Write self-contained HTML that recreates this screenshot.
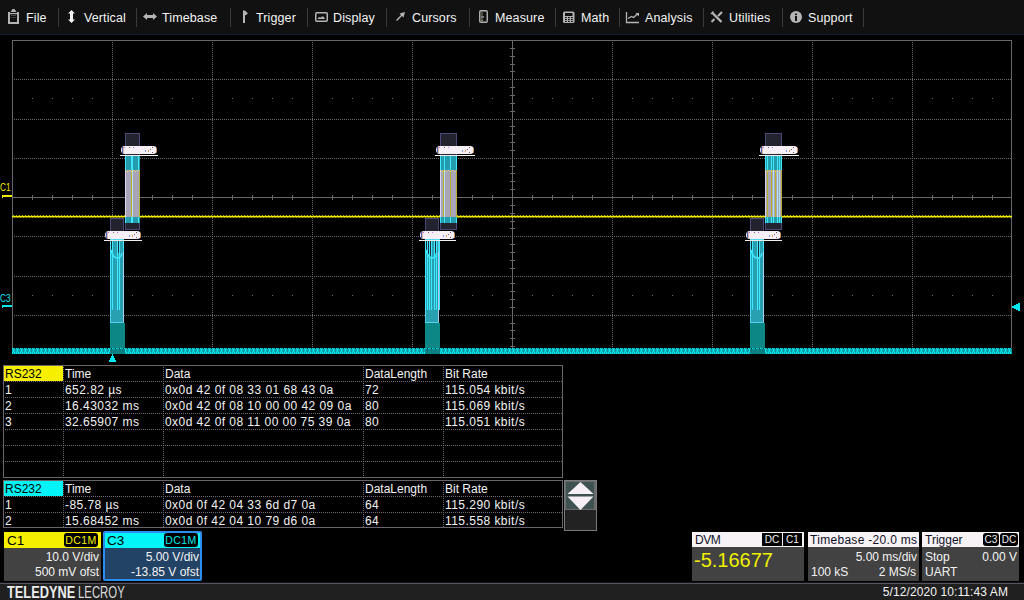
<!DOCTYPE html>
<html><head><meta charset="utf-8"><style>
*{margin:0;padding:0;box-sizing:border-box}
html,body{width:1024px;height:600px;overflow:hidden;background:#000;font-family:"Liberation Sans",sans-serif;color:#f0f0f0}
.abs{position:absolute}
#menu{position:absolute;left:0;top:0;width:1024px;height:35px;background:#111111;border-bottom:1px solid #0f1d2c}
.mi{position:absolute;top:11px;font-size:12.5px;letter-spacing:0.12px;color:#f4f4f4;white-space:nowrap;line-height:14px}
.sep{position:absolute;top:8px;width:1px;height:19px;background:#3a3a3a}
svg{position:absolute;left:0;top:0}
.tbl{position:absolute;border:1px solid #68666b;}
.cell{position:absolute;font-size:12px;line-height:14px;letter-spacing:0.45px;color:#f4f4f4;white-space:nowrap}
.hdot{position:absolute;height:1px;background-image:linear-gradient(90deg,#6e6c71 50%,transparent 50%);background-size:2px 1px}
.lbl{position:absolute;font-size:12px;line-height:14px;color:#f4f4f4;white-space:nowrap}
.r{text-align:right}
.badge{position:absolute;background:#000;border-radius:3px;font-size:12px;line-height:14px;text-align:center}
.vdot{position:absolute;width:1px;background-image:linear-gradient(180deg,#6e6c71 50%,transparent 50%);background-size:1px 2px}
</style></head><body>

<div id="menu">
<div class="mi" style="left:26px">File</div>
<div class="mi" style="left:84px">Vertical</div>
<div class="mi" style="left:162px">Timebase</div>
<div class="mi" style="left:256px">Trigger</div>
<div class="mi" style="left:333px">Display</div>
<div class="mi" style="left:412px">Cursors</div>
<div class="mi" style="left:495px">Measure</div>
<div class="mi" style="left:581px">Math</div>
<div class="mi" style="left:645px">Analysis</div>
<div class="mi" style="left:729px">Utilities</div>
<div class="mi" style="left:808px">Support</div>
<div class="sep" style="left:58px"></div>
<div class="sep" style="left:136px"></div>
<div class="sep" style="left:230px"></div>
<div class="sep" style="left:307px"></div>
<div class="sep" style="left:386px"></div>
<div class="sep" style="left:469px"></div>
<div class="sep" style="left:555px"></div>
<div class="sep" style="left:619px"></div>
<div class="sep" style="left:703px"></div>
<div class="sep" style="left:782px"></div>
<div class="sep" style="left:863px"></div>
<svg width="1024" height="34" style="position:absolute;left:0;top:0">
<g fill="#b4b4b4">
<!-- File clipboard -->
<path d="M8,12 h2 v10 h7 v-10 h2 v12 h-11 z"/>
<path d="M10.5,12 L12.5,9 h2 L16.5,12 z"/>
<rect x="10" y="13" width="7" height="1.2"/>
<rect x="11" y="15" width="5" height="0.8" fill="#555"/>
<rect x="11" y="17" width="5" height="0.8" fill="#444"/>
</g>
<!-- Vertical arrow -->
<path d="M71.5,10 L75,13.5 L73,13.5 L73,19.5 L75,19.5 L71.5,23 L68,19.5 L70,19.5 L70,13.5 L68,13.5 Z" fill="#f2f2f2"/>
<!-- Timebase arrow -->
<path d="M143,16.5 L147,13 L147,15 L153,15 L153,13 L157,16.5 L153,20 L153,18 L147,18 L147,20 Z" fill="#b4b4b4"/>
<!-- Trigger flag -->
<path d="M243,10.5 L245,10.5 L248,13.5 L245,15.5 L245,23 L243,23 Z" fill="#b4b4b4"/>
<!-- Display -->
<rect x="315.75" y="12.75" width="11.5" height="8.5" rx="1" fill="none" stroke="#b4b4b4" stroke-width="1.5"/>
<path d="M317.5,19 L319,17 L320.5,17.5 L322,16.5 L323.5,16.5 L325,19 Z" fill="#b4b4b4"/>
<!-- Cursors -->
<path d="M396,20 L401,15 L399.5,13.5 L405,12 L403.5,17.5 L402,16 L397,21 Z" fill="#b4b4b4"/>
<!-- Measure ruler -->
<rect x="479.75" y="10.75" width="7.5" height="11.5" rx="1.2" fill="none" stroke="#b4b4b4" stroke-width="1.4"/>
<g fill="#8a8a70"><rect x="481" y="12.5" width="2" height="1"/><rect x="481" y="14.5" width="2" height="1"/><rect x="481" y="16.5" width="3" height="1" fill="#ddd"/><rect x="481" y="18.5" width="2" height="1"/><rect x="481" y="20" width="2" height="1"/></g>
<!-- Math calculator -->
<rect x="563" y="11.5" width="11.5" height="11.5" rx="1.5" fill="#b4b4b4"/>
<rect x="565" y="13" width="7.5" height="3" fill="#111"/>
<g fill="#111"><rect x="565" y="17" width="1.8" height="1.2"/><rect x="568" y="17" width="1.8" height="1.2"/><rect x="571" y="17" width="1.8" height="1.2"/>
<rect x="565" y="19" width="1.8" height="1.2"/><rect x="568" y="19" width="1.8" height="1.2"/><rect x="571" y="19" width="1.8" height="1.2"/>
<rect x="565" y="21" width="1.8" height="1"/><rect x="568" y="21" width="1.8" height="1"/><rect x="571" y="21" width="1.8" height="1"/></g>
<!-- Analysis -->
<path d="M626.5,12 V22.5 H639" fill="none" stroke="#b4b4b4" stroke-width="1.3"/>
<path d="M628,18.5 L631.5,16.5 L633.5,17.5 L637.5,14" fill="none" stroke="#b4b4b4" stroke-width="1.3"/>
<path d="M635.5,13 L639,13 L639,16.5 Z" fill="#b4b4b4"/>
<!-- Utilities -->
<path d="M712.5,13 L721.5,22" stroke="#b4b4b4" stroke-width="2.4"/>
<path d="M711,14 L713.5,11.5" stroke="#b4b4b4" stroke-width="1.5"/>
<path d="M714,15 L722.5,11" stroke="none"/>
<path d="M718,16 L722,12" stroke="#b4b4b4" stroke-width="2.2"/>
<path d="M711.5,22 L714.5,19" stroke="#b4b4b4" stroke-width="2"/>
<circle cx="796" cy="17" r="6" fill="#b4b4b4"/>
<rect x="795" y="13.5" width="2" height="1.6" fill="#111"/>
<rect x="795" y="16" width="2" height="5" fill="#111"/>
</svg>
</div>
<svg width="1024" height="600" viewBox="0 0 1024 600" shape-rendering="crispEdges"><rect x="12.5" y="40.5" width="999" height="312" fill="none" stroke="#68666b" stroke-width="1"/><line x1="14" y1="79.5" x2="1011" y2="79.5" stroke="#6e6c71" stroke-dasharray="1 1"/><line x1="14" y1="119.5" x2="1011" y2="119.5" stroke="#6e6c71" stroke-dasharray="1 1"/><line x1="14" y1="158.5" x2="1011" y2="158.5" stroke="#6e6c71" stroke-dasharray="1 1"/><line x1="14" y1="236.5" x2="1011" y2="236.5" stroke="#6e6c71" stroke-dasharray="1 1"/><line x1="14" y1="276.5" x2="1011" y2="276.5" stroke="#6e6c71" stroke-dasharray="1 1"/><line x1="14" y1="315.5" x2="1011" y2="315.5" stroke="#6e6c71" stroke-dasharray="1 1"/><line x1="112.5" y1="42" x2="112.5" y2="352" stroke="#6e6c71" stroke-dasharray="1 1"/><line x1="212.5" y1="42" x2="212.5" y2="352" stroke="#6e6c71" stroke-dasharray="1 1"/><line x1="312.5" y1="42" x2="312.5" y2="352" stroke="#6e6c71" stroke-dasharray="1 1"/><line x1="412.5" y1="42" x2="412.5" y2="352" stroke="#6e6c71" stroke-dasharray="1 1"/><line x1="612.5" y1="42" x2="612.5" y2="352" stroke="#6e6c71" stroke-dasharray="1 1"/><line x1="712.5" y1="42" x2="712.5" y2="352" stroke="#6e6c71" stroke-dasharray="1 1"/><line x1="812.5" y1="42" x2="812.5" y2="352" stroke="#6e6c71" stroke-dasharray="1 1"/><line x1="912.5" y1="42" x2="912.5" y2="352" stroke="#6e6c71" stroke-dasharray="1 1"/><line x1="12" y1="197.5" x2="1011" y2="197.5" stroke="#68666b"/><line x1="512.5" y1="40" x2="512.5" y2="352" stroke="#68666b"/><rect x="32" y="195" width="1" height="5" fill="#68666b"/><rect x="52" y="195" width="1" height="5" fill="#68666b"/><rect x="72" y="195" width="1" height="5" fill="#68666b"/><rect x="92" y="195" width="1" height="5" fill="#68666b"/><rect x="132" y="195" width="1" height="5" fill="#68666b"/><rect x="152" y="195" width="1" height="5" fill="#68666b"/><rect x="172" y="195" width="1" height="5" fill="#68666b"/><rect x="192" y="195" width="1" height="5" fill="#68666b"/><rect x="232" y="195" width="1" height="5" fill="#68666b"/><rect x="252" y="195" width="1" height="5" fill="#68666b"/><rect x="272" y="195" width="1" height="5" fill="#68666b"/><rect x="292" y="195" width="1" height="5" fill="#68666b"/><rect x="332" y="195" width="1" height="5" fill="#68666b"/><rect x="352" y="195" width="1" height="5" fill="#68666b"/><rect x="372" y="195" width="1" height="5" fill="#68666b"/><rect x="392" y="195" width="1" height="5" fill="#68666b"/><rect x="432" y="195" width="1" height="5" fill="#68666b"/><rect x="452" y="195" width="1" height="5" fill="#68666b"/><rect x="472" y="195" width="1" height="5" fill="#68666b"/><rect x="492" y="195" width="1" height="5" fill="#68666b"/><rect x="532" y="195" width="1" height="5" fill="#68666b"/><rect x="552" y="195" width="1" height="5" fill="#68666b"/><rect x="572" y="195" width="1" height="5" fill="#68666b"/><rect x="592" y="195" width="1" height="5" fill="#68666b"/><rect x="632" y="195" width="1" height="5" fill="#68666b"/><rect x="652" y="195" width="1" height="5" fill="#68666b"/><rect x="672" y="195" width="1" height="5" fill="#68666b"/><rect x="692" y="195" width="1" height="5" fill="#68666b"/><rect x="732" y="195" width="1" height="5" fill="#68666b"/><rect x="752" y="195" width="1" height="5" fill="#68666b"/><rect x="772" y="195" width="1" height="5" fill="#68666b"/><rect x="792" y="195" width="1" height="5" fill="#68666b"/><rect x="832" y="195" width="1" height="5" fill="#68666b"/><rect x="852" y="195" width="1" height="5" fill="#68666b"/><rect x="872" y="195" width="1" height="5" fill="#68666b"/><rect x="892" y="195" width="1" height="5" fill="#68666b"/><rect x="932" y="195" width="1" height="5" fill="#68666b"/><rect x="952" y="195" width="1" height="5" fill="#68666b"/><rect x="972" y="195" width="1" height="5" fill="#68666b"/><rect x="992" y="195" width="1" height="5" fill="#68666b"/><rect x="510" y="48" width="5" height="1" fill="#68666b"/><rect x="510" y="56" width="5" height="1" fill="#68666b"/><rect x="510" y="64" width="5" height="1" fill="#68666b"/><rect x="510" y="71" width="5" height="1" fill="#68666b"/><rect x="510" y="87" width="5" height="1" fill="#68666b"/><rect x="510" y="95" width="5" height="1" fill="#68666b"/><rect x="510" y="103" width="5" height="1" fill="#68666b"/><rect x="510" y="111" width="5" height="1" fill="#68666b"/><rect x="510" y="126" width="5" height="1" fill="#68666b"/><rect x="510" y="134" width="5" height="1" fill="#68666b"/><rect x="510" y="142" width="5" height="1" fill="#68666b"/><rect x="510" y="150" width="5" height="1" fill="#68666b"/><rect x="510" y="166" width="5" height="1" fill="#68666b"/><rect x="510" y="173" width="5" height="1" fill="#68666b"/><rect x="510" y="181" width="5" height="1" fill="#68666b"/><rect x="510" y="189" width="5" height="1" fill="#68666b"/><rect x="510" y="205" width="5" height="1" fill="#68666b"/><rect x="510" y="213" width="5" height="1" fill="#68666b"/><rect x="510" y="221" width="5" height="1" fill="#68666b"/><rect x="510" y="228" width="5" height="1" fill="#68666b"/><rect x="510" y="244" width="5" height="1" fill="#68666b"/><rect x="510" y="252" width="5" height="1" fill="#68666b"/><rect x="510" y="260" width="5" height="1" fill="#68666b"/><rect x="510" y="268" width="5" height="1" fill="#68666b"/><rect x="510" y="283" width="5" height="1" fill="#68666b"/><rect x="510" y="291" width="5" height="1" fill="#68666b"/><rect x="510" y="299" width="5" height="1" fill="#68666b"/><rect x="510" y="307" width="5" height="1" fill="#68666b"/><rect x="510" y="323" width="5" height="1" fill="#68666b"/><rect x="510" y="330" width="5" height="1" fill="#68666b"/><rect x="510" y="338" width="5" height="1" fill="#68666b"/><rect x="510" y="346" width="5" height="1" fill="#68666b"/><rect x="32" y="98" width="1" height="1" fill="#6e6c71"/><rect x="52" y="98" width="1" height="1" fill="#6e6c71"/><rect x="72" y="98" width="1" height="1" fill="#6e6c71"/><rect x="92" y="98" width="1" height="1" fill="#6e6c71"/><rect x="132" y="98" width="1" height="1" fill="#6e6c71"/><rect x="152" y="98" width="1" height="1" fill="#6e6c71"/><rect x="172" y="98" width="1" height="1" fill="#6e6c71"/><rect x="192" y="98" width="1" height="1" fill="#6e6c71"/><rect x="232" y="98" width="1" height="1" fill="#6e6c71"/><rect x="252" y="98" width="1" height="1" fill="#6e6c71"/><rect x="272" y="98" width="1" height="1" fill="#6e6c71"/><rect x="292" y="98" width="1" height="1" fill="#6e6c71"/><rect x="332" y="98" width="1" height="1" fill="#6e6c71"/><rect x="352" y="98" width="1" height="1" fill="#6e6c71"/><rect x="372" y="98" width="1" height="1" fill="#6e6c71"/><rect x="392" y="98" width="1" height="1" fill="#6e6c71"/><rect x="432" y="98" width="1" height="1" fill="#6e6c71"/><rect x="452" y="98" width="1" height="1" fill="#6e6c71"/><rect x="472" y="98" width="1" height="1" fill="#6e6c71"/><rect x="492" y="98" width="1" height="1" fill="#6e6c71"/><rect x="532" y="98" width="1" height="1" fill="#6e6c71"/><rect x="552" y="98" width="1" height="1" fill="#6e6c71"/><rect x="572" y="98" width="1" height="1" fill="#6e6c71"/><rect x="592" y="98" width="1" height="1" fill="#6e6c71"/><rect x="632" y="98" width="1" height="1" fill="#6e6c71"/><rect x="652" y="98" width="1" height="1" fill="#6e6c71"/><rect x="672" y="98" width="1" height="1" fill="#6e6c71"/><rect x="692" y="98" width="1" height="1" fill="#6e6c71"/><rect x="732" y="98" width="1" height="1" fill="#6e6c71"/><rect x="752" y="98" width="1" height="1" fill="#6e6c71"/><rect x="772" y="98" width="1" height="1" fill="#6e6c71"/><rect x="792" y="98" width="1" height="1" fill="#6e6c71"/><rect x="832" y="98" width="1" height="1" fill="#6e6c71"/><rect x="852" y="98" width="1" height="1" fill="#6e6c71"/><rect x="872" y="98" width="1" height="1" fill="#6e6c71"/><rect x="892" y="98" width="1" height="1" fill="#6e6c71"/><rect x="932" y="98" width="1" height="1" fill="#6e6c71"/><rect x="952" y="98" width="1" height="1" fill="#6e6c71"/><rect x="972" y="98" width="1" height="1" fill="#6e6c71"/><rect x="992" y="98" width="1" height="1" fill="#6e6c71"/><rect x="32" y="295" width="1" height="1" fill="#6e6c71"/><rect x="52" y="295" width="1" height="1" fill="#6e6c71"/><rect x="72" y="295" width="1" height="1" fill="#6e6c71"/><rect x="92" y="295" width="1" height="1" fill="#6e6c71"/><rect x="132" y="295" width="1" height="1" fill="#6e6c71"/><rect x="152" y="295" width="1" height="1" fill="#6e6c71"/><rect x="172" y="295" width="1" height="1" fill="#6e6c71"/><rect x="192" y="295" width="1" height="1" fill="#6e6c71"/><rect x="232" y="295" width="1" height="1" fill="#6e6c71"/><rect x="252" y="295" width="1" height="1" fill="#6e6c71"/><rect x="272" y="295" width="1" height="1" fill="#6e6c71"/><rect x="292" y="295" width="1" height="1" fill="#6e6c71"/><rect x="332" y="295" width="1" height="1" fill="#6e6c71"/><rect x="352" y="295" width="1" height="1" fill="#6e6c71"/><rect x="372" y="295" width="1" height="1" fill="#6e6c71"/><rect x="392" y="295" width="1" height="1" fill="#6e6c71"/><rect x="432" y="295" width="1" height="1" fill="#6e6c71"/><rect x="452" y="295" width="1" height="1" fill="#6e6c71"/><rect x="472" y="295" width="1" height="1" fill="#6e6c71"/><rect x="492" y="295" width="1" height="1" fill="#6e6c71"/><rect x="532" y="295" width="1" height="1" fill="#6e6c71"/><rect x="552" y="295" width="1" height="1" fill="#6e6c71"/><rect x="572" y="295" width="1" height="1" fill="#6e6c71"/><rect x="592" y="295" width="1" height="1" fill="#6e6c71"/><rect x="632" y="295" width="1" height="1" fill="#6e6c71"/><rect x="652" y="295" width="1" height="1" fill="#6e6c71"/><rect x="672" y="295" width="1" height="1" fill="#6e6c71"/><rect x="692" y="295" width="1" height="1" fill="#6e6c71"/><rect x="732" y="295" width="1" height="1" fill="#6e6c71"/><rect x="752" y="295" width="1" height="1" fill="#6e6c71"/><rect x="772" y="295" width="1" height="1" fill="#6e6c71"/><rect x="792" y="295" width="1" height="1" fill="#6e6c71"/><rect x="832" y="295" width="1" height="1" fill="#6e6c71"/><rect x="852" y="295" width="1" height="1" fill="#6e6c71"/><rect x="872" y="295" width="1" height="1" fill="#6e6c71"/><rect x="892" y="295" width="1" height="1" fill="#6e6c71"/><rect x="932" y="295" width="1" height="1" fill="#6e6c71"/><rect x="952" y="295" width="1" height="1" fill="#6e6c71"/><rect x="972" y="295" width="1" height="1" fill="#6e6c71"/><rect x="992" y="295" width="1" height="1" fill="#6e6c71"/><rect x="12" y="215.8" width="1000" height="1.6" fill="#f0ec00" shape-rendering="auto"/><rect x="13" y="215" width="1" height="1" fill="#f0ec00" opacity="0.6"/><rect x="14" y="217" width="1" height="1" fill="#f0ec00" opacity="0.5"/><rect x="16" y="215" width="1" height="1" fill="#f0ec00" opacity="0.6"/><rect x="17" y="217" width="1" height="1" fill="#f0ec00" opacity="0.5"/><rect x="19" y="215" width="1" height="1" fill="#f0ec00" opacity="0.6"/><rect x="20" y="217" width="1" height="1" fill="#f0ec00" opacity="0.5"/><rect x="22" y="215" width="1" height="1" fill="#f0ec00" opacity="0.6"/><rect x="23" y="217" width="1" height="1" fill="#f0ec00" opacity="0.5"/><rect x="25" y="215" width="1" height="1" fill="#f0ec00" opacity="0.6"/><rect x="26" y="217" width="1" height="1" fill="#f0ec00" opacity="0.5"/><rect x="28" y="215" width="1" height="1" fill="#f0ec00" opacity="0.6"/><rect x="29" y="217" width="1" height="1" fill="#f0ec00" opacity="0.5"/><rect x="31" y="215" width="1" height="1" fill="#f0ec00" opacity="0.6"/><rect x="32" y="217" width="1" height="1" fill="#f0ec00" opacity="0.5"/><rect x="34" y="215" width="1" height="1" fill="#f0ec00" opacity="0.6"/><rect x="35" y="217" width="1" height="1" fill="#f0ec00" opacity="0.5"/><rect x="37" y="215" width="1" height="1" fill="#f0ec00" opacity="0.6"/><rect x="38" y="217" width="1" height="1" fill="#f0ec00" opacity="0.5"/><rect x="40" y="215" width="1" height="1" fill="#f0ec00" opacity="0.6"/><rect x="41" y="217" width="1" height="1" fill="#f0ec00" opacity="0.5"/><rect x="43" y="215" width="1" height="1" fill="#f0ec00" opacity="0.6"/><rect x="44" y="217" width="1" height="1" fill="#f0ec00" opacity="0.5"/><rect x="46" y="215" width="1" height="1" fill="#f0ec00" opacity="0.6"/><rect x="47" y="217" width="1" height="1" fill="#f0ec00" opacity="0.5"/><rect x="49" y="215" width="1" height="1" fill="#f0ec00" opacity="0.6"/><rect x="50" y="217" width="1" height="1" fill="#f0ec00" opacity="0.5"/><rect x="52" y="215" width="1" height="1" fill="#f0ec00" opacity="0.6"/><rect x="53" y="217" width="1" height="1" fill="#f0ec00" opacity="0.5"/><rect x="55" y="215" width="1" height="1" fill="#f0ec00" opacity="0.6"/><rect x="56" y="217" width="1" height="1" fill="#f0ec00" opacity="0.5"/><rect x="58" y="215" width="1" height="1" fill="#f0ec00" opacity="0.6"/><rect x="59" y="217" width="1" height="1" fill="#f0ec00" opacity="0.5"/><rect x="61" y="215" width="1" height="1" fill="#f0ec00" opacity="0.6"/><rect x="62" y="217" width="1" height="1" fill="#f0ec00" opacity="0.5"/><rect x="64" y="215" width="1" height="1" fill="#f0ec00" opacity="0.6"/><rect x="65" y="217" width="1" height="1" fill="#f0ec00" opacity="0.5"/><rect x="67" y="215" width="1" height="1" fill="#f0ec00" opacity="0.6"/><rect x="68" y="217" width="1" height="1" fill="#f0ec00" opacity="0.5"/><rect x="70" y="215" width="1" height="1" fill="#f0ec00" opacity="0.6"/><rect x="71" y="217" width="1" height="1" fill="#f0ec00" opacity="0.5"/><rect x="73" y="215" width="1" height="1" fill="#f0ec00" opacity="0.6"/><rect x="74" y="217" width="1" height="1" fill="#f0ec00" opacity="0.5"/><rect x="76" y="215" width="1" height="1" fill="#f0ec00" opacity="0.6"/><rect x="77" y="217" width="1" height="1" fill="#f0ec00" opacity="0.5"/><rect x="79" y="215" width="1" height="1" fill="#f0ec00" opacity="0.6"/><rect x="80" y="217" width="1" height="1" fill="#f0ec00" opacity="0.5"/><rect x="82" y="215" width="1" height="1" fill="#f0ec00" opacity="0.6"/><rect x="83" y="217" width="1" height="1" fill="#f0ec00" opacity="0.5"/><rect x="85" y="215" width="1" height="1" fill="#f0ec00" opacity="0.6"/><rect x="86" y="217" width="1" height="1" fill="#f0ec00" opacity="0.5"/><rect x="88" y="215" width="1" height="1" fill="#f0ec00" opacity="0.6"/><rect x="89" y="217" width="1" height="1" fill="#f0ec00" opacity="0.5"/><rect x="91" y="215" width="1" height="1" fill="#f0ec00" opacity="0.6"/><rect x="92" y="217" width="1" height="1" fill="#f0ec00" opacity="0.5"/><rect x="94" y="215" width="1" height="1" fill="#f0ec00" opacity="0.6"/><rect x="95" y="217" width="1" height="1" fill="#f0ec00" opacity="0.5"/><rect x="97" y="215" width="1" height="1" fill="#f0ec00" opacity="0.6"/><rect x="98" y="217" width="1" height="1" fill="#f0ec00" opacity="0.5"/><rect x="100" y="215" width="1" height="1" fill="#f0ec00" opacity="0.6"/><rect x="101" y="217" width="1" height="1" fill="#f0ec00" opacity="0.5"/><rect x="103" y="215" width="1" height="1" fill="#f0ec00" opacity="0.6"/><rect x="104" y="217" width="1" height="1" fill="#f0ec00" opacity="0.5"/><rect x="106" y="215" width="1" height="1" fill="#f0ec00" opacity="0.6"/><rect x="107" y="217" width="1" height="1" fill="#f0ec00" opacity="0.5"/><rect x="109" y="215" width="1" height="1" fill="#f0ec00" opacity="0.6"/><rect x="110" y="217" width="1" height="1" fill="#f0ec00" opacity="0.5"/><rect x="112" y="215" width="1" height="1" fill="#f0ec00" opacity="0.6"/><rect x="113" y="217" width="1" height="1" fill="#f0ec00" opacity="0.5"/><rect x="115" y="215" width="1" height="1" fill="#f0ec00" opacity="0.6"/><rect x="116" y="217" width="1" height="1" fill="#f0ec00" opacity="0.5"/><rect x="118" y="215" width="1" height="1" fill="#f0ec00" opacity="0.6"/><rect x="119" y="217" width="1" height="1" fill="#f0ec00" opacity="0.5"/><rect x="121" y="215" width="1" height="1" fill="#f0ec00" opacity="0.6"/><rect x="122" y="217" width="1" height="1" fill="#f0ec00" opacity="0.5"/><rect x="124" y="215" width="1" height="1" fill="#f0ec00" opacity="0.6"/><rect x="125" y="217" width="1" height="1" fill="#f0ec00" opacity="0.5"/><rect x="127" y="215" width="1" height="1" fill="#f0ec00" opacity="0.6"/><rect x="128" y="217" width="1" height="1" fill="#f0ec00" opacity="0.5"/><rect x="130" y="215" width="1" height="1" fill="#f0ec00" opacity="0.6"/><rect x="131" y="217" width="1" height="1" fill="#f0ec00" opacity="0.5"/><rect x="133" y="215" width="1" height="1" fill="#f0ec00" opacity="0.6"/><rect x="134" y="217" width="1" height="1" fill="#f0ec00" opacity="0.5"/><rect x="136" y="215" width="1" height="1" fill="#f0ec00" opacity="0.6"/><rect x="137" y="217" width="1" height="1" fill="#f0ec00" opacity="0.5"/><rect x="139" y="215" width="1" height="1" fill="#f0ec00" opacity="0.6"/><rect x="140" y="217" width="1" height="1" fill="#f0ec00" opacity="0.5"/><rect x="142" y="215" width="1" height="1" fill="#f0ec00" opacity="0.6"/><rect x="143" y="217" width="1" height="1" fill="#f0ec00" opacity="0.5"/><rect x="145" y="215" width="1" height="1" fill="#f0ec00" opacity="0.6"/><rect x="146" y="217" width="1" height="1" fill="#f0ec00" opacity="0.5"/><rect x="148" y="215" width="1" height="1" fill="#f0ec00" opacity="0.6"/><rect x="149" y="217" width="1" height="1" fill="#f0ec00" opacity="0.5"/><rect x="151" y="215" width="1" height="1" fill="#f0ec00" opacity="0.6"/><rect x="152" y="217" width="1" height="1" fill="#f0ec00" opacity="0.5"/><rect x="154" y="215" width="1" height="1" fill="#f0ec00" opacity="0.6"/><rect x="155" y="217" width="1" height="1" fill="#f0ec00" opacity="0.5"/><rect x="157" y="215" width="1" height="1" fill="#f0ec00" opacity="0.6"/><rect x="158" y="217" width="1" height="1" fill="#f0ec00" opacity="0.5"/><rect x="160" y="215" width="1" height="1" fill="#f0ec00" opacity="0.6"/><rect x="161" y="217" width="1" height="1" fill="#f0ec00" opacity="0.5"/><rect x="163" y="215" width="1" height="1" fill="#f0ec00" opacity="0.6"/><rect x="164" y="217" width="1" height="1" fill="#f0ec00" opacity="0.5"/><rect x="166" y="215" width="1" height="1" fill="#f0ec00" opacity="0.6"/><rect x="167" y="217" width="1" height="1" fill="#f0ec00" opacity="0.5"/><rect x="169" y="215" width="1" height="1" fill="#f0ec00" opacity="0.6"/><rect x="170" y="217" width="1" height="1" fill="#f0ec00" opacity="0.5"/><rect x="172" y="215" width="1" height="1" fill="#f0ec00" opacity="0.6"/><rect x="173" y="217" width="1" height="1" fill="#f0ec00" opacity="0.5"/><rect x="175" y="215" width="1" height="1" fill="#f0ec00" opacity="0.6"/><rect x="176" y="217" width="1" height="1" fill="#f0ec00" opacity="0.5"/><rect x="178" y="215" width="1" height="1" fill="#f0ec00" opacity="0.6"/><rect x="179" y="217" width="1" height="1" fill="#f0ec00" opacity="0.5"/><rect x="181" y="215" width="1" height="1" fill="#f0ec00" opacity="0.6"/><rect x="182" y="217" width="1" height="1" fill="#f0ec00" opacity="0.5"/><rect x="184" y="215" width="1" height="1" fill="#f0ec00" opacity="0.6"/><rect x="185" y="217" width="1" height="1" fill="#f0ec00" opacity="0.5"/><rect x="187" y="215" width="1" height="1" fill="#f0ec00" opacity="0.6"/><rect x="188" y="217" width="1" height="1" fill="#f0ec00" opacity="0.5"/><rect x="190" y="215" width="1" height="1" fill="#f0ec00" opacity="0.6"/><rect x="191" y="217" width="1" height="1" fill="#f0ec00" opacity="0.5"/><rect x="193" y="215" width="1" height="1" fill="#f0ec00" opacity="0.6"/><rect x="194" y="217" width="1" height="1" fill="#f0ec00" opacity="0.5"/><rect x="196" y="215" width="1" height="1" fill="#f0ec00" opacity="0.6"/><rect x="197" y="217" width="1" height="1" fill="#f0ec00" opacity="0.5"/><rect x="199" y="215" width="1" height="1" fill="#f0ec00" opacity="0.6"/><rect x="200" y="217" width="1" height="1" fill="#f0ec00" opacity="0.5"/><rect x="202" y="215" width="1" height="1" fill="#f0ec00" opacity="0.6"/><rect x="203" y="217" width="1" height="1" fill="#f0ec00" opacity="0.5"/><rect x="205" y="215" width="1" height="1" fill="#f0ec00" opacity="0.6"/><rect x="206" y="217" width="1" height="1" fill="#f0ec00" opacity="0.5"/><rect x="208" y="215" width="1" height="1" fill="#f0ec00" opacity="0.6"/><rect x="209" y="217" width="1" height="1" fill="#f0ec00" opacity="0.5"/><rect x="211" y="215" width="1" height="1" fill="#f0ec00" opacity="0.6"/><rect x="212" y="217" width="1" height="1" fill="#f0ec00" opacity="0.5"/><rect x="214" y="215" width="1" height="1" fill="#f0ec00" opacity="0.6"/><rect x="215" y="217" width="1" height="1" fill="#f0ec00" opacity="0.5"/><rect x="217" y="215" width="1" height="1" fill="#f0ec00" opacity="0.6"/><rect x="218" y="217" width="1" height="1" fill="#f0ec00" opacity="0.5"/><rect x="220" y="215" width="1" height="1" fill="#f0ec00" opacity="0.6"/><rect x="221" y="217" width="1" height="1" fill="#f0ec00" opacity="0.5"/><rect x="223" y="215" width="1" height="1" fill="#f0ec00" opacity="0.6"/><rect x="224" y="217" width="1" height="1" fill="#f0ec00" opacity="0.5"/><rect x="226" y="215" width="1" height="1" fill="#f0ec00" opacity="0.6"/><rect x="227" y="217" width="1" height="1" fill="#f0ec00" opacity="0.5"/><rect x="229" y="215" width="1" height="1" fill="#f0ec00" opacity="0.6"/><rect x="230" y="217" width="1" height="1" fill="#f0ec00" opacity="0.5"/><rect x="232" y="215" width="1" height="1" fill="#f0ec00" opacity="0.6"/><rect x="233" y="217" width="1" height="1" fill="#f0ec00" opacity="0.5"/><rect x="235" y="215" width="1" height="1" fill="#f0ec00" opacity="0.6"/><rect x="236" y="217" width="1" height="1" fill="#f0ec00" opacity="0.5"/><rect x="238" y="215" width="1" height="1" fill="#f0ec00" opacity="0.6"/><rect x="239" y="217" width="1" height="1" fill="#f0ec00" opacity="0.5"/><rect x="241" y="215" width="1" height="1" fill="#f0ec00" opacity="0.6"/><rect x="242" y="217" width="1" height="1" fill="#f0ec00" opacity="0.5"/><rect x="244" y="215" width="1" height="1" fill="#f0ec00" opacity="0.6"/><rect x="245" y="217" width="1" height="1" fill="#f0ec00" opacity="0.5"/><rect x="247" y="215" width="1" height="1" fill="#f0ec00" opacity="0.6"/><rect x="248" y="217" width="1" height="1" fill="#f0ec00" opacity="0.5"/><rect x="250" y="215" width="1" height="1" fill="#f0ec00" opacity="0.6"/><rect x="251" y="217" width="1" height="1" fill="#f0ec00" opacity="0.5"/><rect x="253" y="215" width="1" height="1" fill="#f0ec00" opacity="0.6"/><rect x="254" y="217" width="1" height="1" fill="#f0ec00" opacity="0.5"/><rect x="256" y="215" width="1" height="1" fill="#f0ec00" opacity="0.6"/><rect x="257" y="217" width="1" height="1" fill="#f0ec00" opacity="0.5"/><rect x="259" y="215" width="1" height="1" fill="#f0ec00" opacity="0.6"/><rect x="260" y="217" width="1" height="1" fill="#f0ec00" opacity="0.5"/><rect x="262" y="215" width="1" height="1" fill="#f0ec00" opacity="0.6"/><rect x="263" y="217" width="1" height="1" fill="#f0ec00" opacity="0.5"/><rect x="265" y="215" width="1" height="1" fill="#f0ec00" opacity="0.6"/><rect x="266" y="217" width="1" height="1" fill="#f0ec00" opacity="0.5"/><rect x="268" y="215" width="1" height="1" fill="#f0ec00" opacity="0.6"/><rect x="269" y="217" width="1" height="1" fill="#f0ec00" opacity="0.5"/><rect x="271" y="215" width="1" height="1" fill="#f0ec00" opacity="0.6"/><rect x="272" y="217" width="1" height="1" fill="#f0ec00" opacity="0.5"/><rect x="274" y="215" width="1" height="1" fill="#f0ec00" opacity="0.6"/><rect x="275" y="217" width="1" height="1" fill="#f0ec00" opacity="0.5"/><rect x="277" y="215" width="1" height="1" fill="#f0ec00" opacity="0.6"/><rect x="278" y="217" width="1" height="1" fill="#f0ec00" opacity="0.5"/><rect x="280" y="215" width="1" height="1" fill="#f0ec00" opacity="0.6"/><rect x="281" y="217" width="1" height="1" fill="#f0ec00" opacity="0.5"/><rect x="283" y="215" width="1" height="1" fill="#f0ec00" opacity="0.6"/><rect x="284" y="217" width="1" height="1" fill="#f0ec00" opacity="0.5"/><rect x="286" y="215" width="1" height="1" fill="#f0ec00" opacity="0.6"/><rect x="287" y="217" width="1" height="1" fill="#f0ec00" opacity="0.5"/><rect x="289" y="215" width="1" height="1" fill="#f0ec00" opacity="0.6"/><rect x="290" y="217" width="1" height="1" fill="#f0ec00" opacity="0.5"/><rect x="292" y="215" width="1" height="1" fill="#f0ec00" opacity="0.6"/><rect x="293" y="217" width="1" height="1" fill="#f0ec00" opacity="0.5"/><rect x="295" y="215" width="1" height="1" fill="#f0ec00" opacity="0.6"/><rect x="296" y="217" width="1" height="1" fill="#f0ec00" opacity="0.5"/><rect x="298" y="215" width="1" height="1" fill="#f0ec00" opacity="0.6"/><rect x="299" y="217" width="1" height="1" fill="#f0ec00" opacity="0.5"/><rect x="301" y="215" width="1" height="1" fill="#f0ec00" opacity="0.6"/><rect x="302" y="217" width="1" height="1" fill="#f0ec00" opacity="0.5"/><rect x="304" y="215" width="1" height="1" fill="#f0ec00" opacity="0.6"/><rect x="305" y="217" width="1" height="1" fill="#f0ec00" opacity="0.5"/><rect x="307" y="215" width="1" height="1" fill="#f0ec00" opacity="0.6"/><rect x="308" y="217" width="1" height="1" fill="#f0ec00" opacity="0.5"/><rect x="310" y="215" width="1" height="1" fill="#f0ec00" opacity="0.6"/><rect x="311" y="217" width="1" height="1" fill="#f0ec00" opacity="0.5"/><rect x="313" y="215" width="1" height="1" fill="#f0ec00" opacity="0.6"/><rect x="314" y="217" width="1" height="1" fill="#f0ec00" opacity="0.5"/><rect x="316" y="215" width="1" height="1" fill="#f0ec00" opacity="0.6"/><rect x="317" y="217" width="1" height="1" fill="#f0ec00" opacity="0.5"/><rect x="319" y="215" width="1" height="1" fill="#f0ec00" opacity="0.6"/><rect x="320" y="217" width="1" height="1" fill="#f0ec00" opacity="0.5"/><rect x="322" y="215" width="1" height="1" fill="#f0ec00" opacity="0.6"/><rect x="323" y="217" width="1" height="1" fill="#f0ec00" opacity="0.5"/><rect x="325" y="215" width="1" height="1" fill="#f0ec00" opacity="0.6"/><rect x="326" y="217" width="1" height="1" fill="#f0ec00" opacity="0.5"/><rect x="328" y="215" width="1" height="1" fill="#f0ec00" opacity="0.6"/><rect x="329" y="217" width="1" height="1" fill="#f0ec00" opacity="0.5"/><rect x="331" y="215" width="1" height="1" fill="#f0ec00" opacity="0.6"/><rect x="332" y="217" width="1" height="1" fill="#f0ec00" opacity="0.5"/><rect x="334" y="215" width="1" height="1" fill="#f0ec00" opacity="0.6"/><rect x="335" y="217" width="1" height="1" fill="#f0ec00" opacity="0.5"/><rect x="337" y="215" width="1" height="1" fill="#f0ec00" opacity="0.6"/><rect x="338" y="217" width="1" height="1" fill="#f0ec00" opacity="0.5"/><rect x="340" y="215" width="1" height="1" fill="#f0ec00" opacity="0.6"/><rect x="341" y="217" width="1" height="1" fill="#f0ec00" opacity="0.5"/><rect x="343" y="215" width="1" height="1" fill="#f0ec00" opacity="0.6"/><rect x="344" y="217" width="1" height="1" fill="#f0ec00" opacity="0.5"/><rect x="346" y="215" width="1" height="1" fill="#f0ec00" opacity="0.6"/><rect x="347" y="217" width="1" height="1" fill="#f0ec00" opacity="0.5"/><rect x="349" y="215" width="1" height="1" fill="#f0ec00" opacity="0.6"/><rect x="350" y="217" width="1" height="1" fill="#f0ec00" opacity="0.5"/><rect x="352" y="215" width="1" height="1" fill="#f0ec00" opacity="0.6"/><rect x="353" y="217" width="1" height="1" fill="#f0ec00" opacity="0.5"/><rect x="355" y="215" width="1" height="1" fill="#f0ec00" opacity="0.6"/><rect x="356" y="217" width="1" height="1" fill="#f0ec00" opacity="0.5"/><rect x="358" y="215" width="1" height="1" fill="#f0ec00" opacity="0.6"/><rect x="359" y="217" width="1" height="1" fill="#f0ec00" opacity="0.5"/><rect x="361" y="215" width="1" height="1" fill="#f0ec00" opacity="0.6"/><rect x="362" y="217" width="1" height="1" fill="#f0ec00" opacity="0.5"/><rect x="364" y="215" width="1" height="1" fill="#f0ec00" opacity="0.6"/><rect x="365" y="217" width="1" height="1" fill="#f0ec00" opacity="0.5"/><rect x="367" y="215" width="1" height="1" fill="#f0ec00" opacity="0.6"/><rect x="368" y="217" width="1" height="1" fill="#f0ec00" opacity="0.5"/><rect x="370" y="215" width="1" height="1" fill="#f0ec00" opacity="0.6"/><rect x="371" y="217" width="1" height="1" fill="#f0ec00" opacity="0.5"/><rect x="373" y="215" width="1" height="1" fill="#f0ec00" opacity="0.6"/><rect x="374" y="217" width="1" height="1" fill="#f0ec00" opacity="0.5"/><rect x="376" y="215" width="1" height="1" fill="#f0ec00" opacity="0.6"/><rect x="377" y="217" width="1" height="1" fill="#f0ec00" opacity="0.5"/><rect x="379" y="215" width="1" height="1" fill="#f0ec00" opacity="0.6"/><rect x="380" y="217" width="1" height="1" fill="#f0ec00" opacity="0.5"/><rect x="382" y="215" width="1" height="1" fill="#f0ec00" opacity="0.6"/><rect x="383" y="217" width="1" height="1" fill="#f0ec00" opacity="0.5"/><rect x="385" y="215" width="1" height="1" fill="#f0ec00" opacity="0.6"/><rect x="386" y="217" width="1" height="1" fill="#f0ec00" opacity="0.5"/><rect x="388" y="215" width="1" height="1" fill="#f0ec00" opacity="0.6"/><rect x="389" y="217" width="1" height="1" fill="#f0ec00" opacity="0.5"/><rect x="391" y="215" width="1" height="1" fill="#f0ec00" opacity="0.6"/><rect x="392" y="217" width="1" height="1" fill="#f0ec00" opacity="0.5"/><rect x="394" y="215" width="1" height="1" fill="#f0ec00" opacity="0.6"/><rect x="395" y="217" width="1" height="1" fill="#f0ec00" opacity="0.5"/><rect x="397" y="215" width="1" height="1" fill="#f0ec00" opacity="0.6"/><rect x="398" y="217" width="1" height="1" fill="#f0ec00" opacity="0.5"/><rect x="400" y="215" width="1" height="1" fill="#f0ec00" opacity="0.6"/><rect x="401" y="217" width="1" height="1" fill="#f0ec00" opacity="0.5"/><rect x="403" y="215" width="1" height="1" fill="#f0ec00" opacity="0.6"/><rect x="404" y="217" width="1" height="1" fill="#f0ec00" opacity="0.5"/><rect x="406" y="215" width="1" height="1" fill="#f0ec00" opacity="0.6"/><rect x="407" y="217" width="1" height="1" fill="#f0ec00" opacity="0.5"/><rect x="409" y="215" width="1" height="1" fill="#f0ec00" opacity="0.6"/><rect x="410" y="217" width="1" height="1" fill="#f0ec00" opacity="0.5"/><rect x="412" y="215" width="1" height="1" fill="#f0ec00" opacity="0.6"/><rect x="413" y="217" width="1" height="1" fill="#f0ec00" opacity="0.5"/><rect x="415" y="215" width="1" height="1" fill="#f0ec00" opacity="0.6"/><rect x="416" y="217" width="1" height="1" fill="#f0ec00" opacity="0.5"/><rect x="418" y="215" width="1" height="1" fill="#f0ec00" opacity="0.6"/><rect x="419" y="217" width="1" height="1" fill="#f0ec00" opacity="0.5"/><rect x="421" y="215" width="1" height="1" fill="#f0ec00" opacity="0.6"/><rect x="422" y="217" width="1" height="1" fill="#f0ec00" opacity="0.5"/><rect x="424" y="215" width="1" height="1" fill="#f0ec00" opacity="0.6"/><rect x="425" y="217" width="1" height="1" fill="#f0ec00" opacity="0.5"/><rect x="427" y="215" width="1" height="1" fill="#f0ec00" opacity="0.6"/><rect x="428" y="217" width="1" height="1" fill="#f0ec00" opacity="0.5"/><rect x="430" y="215" width="1" height="1" fill="#f0ec00" opacity="0.6"/><rect x="431" y="217" width="1" height="1" fill="#f0ec00" opacity="0.5"/><rect x="433" y="215" width="1" height="1" fill="#f0ec00" opacity="0.6"/><rect x="434" y="217" width="1" height="1" fill="#f0ec00" opacity="0.5"/><rect x="436" y="215" width="1" height="1" fill="#f0ec00" opacity="0.6"/><rect x="437" y="217" width="1" height="1" fill="#f0ec00" opacity="0.5"/><rect x="439" y="215" width="1" height="1" fill="#f0ec00" opacity="0.6"/><rect x="440" y="217" width="1" height="1" fill="#f0ec00" opacity="0.5"/><rect x="442" y="215" width="1" height="1" fill="#f0ec00" opacity="0.6"/><rect x="443" y="217" width="1" height="1" fill="#f0ec00" opacity="0.5"/><rect x="445" y="215" width="1" height="1" fill="#f0ec00" opacity="0.6"/><rect x="446" y="217" width="1" height="1" fill="#f0ec00" opacity="0.5"/><rect x="448" y="215" width="1" height="1" fill="#f0ec00" opacity="0.6"/><rect x="449" y="217" width="1" height="1" fill="#f0ec00" opacity="0.5"/><rect x="451" y="215" width="1" height="1" fill="#f0ec00" opacity="0.6"/><rect x="452" y="217" width="1" height="1" fill="#f0ec00" opacity="0.5"/><rect x="454" y="215" width="1" height="1" fill="#f0ec00" opacity="0.6"/><rect x="455" y="217" width="1" height="1" fill="#f0ec00" opacity="0.5"/><rect x="457" y="215" width="1" height="1" fill="#f0ec00" opacity="0.6"/><rect x="458" y="217" width="1" height="1" fill="#f0ec00" opacity="0.5"/><rect x="460" y="215" width="1" height="1" fill="#f0ec00" opacity="0.6"/><rect x="461" y="217" width="1" height="1" fill="#f0ec00" opacity="0.5"/><rect x="463" y="215" width="1" height="1" fill="#f0ec00" opacity="0.6"/><rect x="464" y="217" width="1" height="1" fill="#f0ec00" opacity="0.5"/><rect x="466" y="215" width="1" height="1" fill="#f0ec00" opacity="0.6"/><rect x="467" y="217" width="1" height="1" fill="#f0ec00" opacity="0.5"/><rect x="469" y="215" width="1" height="1" fill="#f0ec00" opacity="0.6"/><rect x="470" y="217" width="1" height="1" fill="#f0ec00" opacity="0.5"/><rect x="472" y="215" width="1" height="1" fill="#f0ec00" opacity="0.6"/><rect x="473" y="217" width="1" height="1" fill="#f0ec00" opacity="0.5"/><rect x="475" y="215" width="1" height="1" fill="#f0ec00" opacity="0.6"/><rect x="476" y="217" width="1" height="1" fill="#f0ec00" opacity="0.5"/><rect x="478" y="215" width="1" height="1" fill="#f0ec00" opacity="0.6"/><rect x="479" y="217" width="1" height="1" fill="#f0ec00" opacity="0.5"/><rect x="481" y="215" width="1" height="1" fill="#f0ec00" opacity="0.6"/><rect x="482" y="217" width="1" height="1" fill="#f0ec00" opacity="0.5"/><rect x="484" y="215" width="1" height="1" fill="#f0ec00" opacity="0.6"/><rect x="485" y="217" width="1" height="1" fill="#f0ec00" opacity="0.5"/><rect x="487" y="215" width="1" height="1" fill="#f0ec00" opacity="0.6"/><rect x="488" y="217" width="1" height="1" fill="#f0ec00" opacity="0.5"/><rect x="490" y="215" width="1" height="1" fill="#f0ec00" opacity="0.6"/><rect x="491" y="217" width="1" height="1" fill="#f0ec00" opacity="0.5"/><rect x="493" y="215" width="1" height="1" fill="#f0ec00" opacity="0.6"/><rect x="494" y="217" width="1" height="1" fill="#f0ec00" opacity="0.5"/><rect x="496" y="215" width="1" height="1" fill="#f0ec00" opacity="0.6"/><rect x="497" y="217" width="1" height="1" fill="#f0ec00" opacity="0.5"/><rect x="499" y="215" width="1" height="1" fill="#f0ec00" opacity="0.6"/><rect x="500" y="217" width="1" height="1" fill="#f0ec00" opacity="0.5"/><rect x="502" y="215" width="1" height="1" fill="#f0ec00" opacity="0.6"/><rect x="503" y="217" width="1" height="1" fill="#f0ec00" opacity="0.5"/><rect x="505" y="215" width="1" height="1" fill="#f0ec00" opacity="0.6"/><rect x="506" y="217" width="1" height="1" fill="#f0ec00" opacity="0.5"/><rect x="508" y="215" width="1" height="1" fill="#f0ec00" opacity="0.6"/><rect x="509" y="217" width="1" height="1" fill="#f0ec00" opacity="0.5"/><rect x="511" y="215" width="1" height="1" fill="#f0ec00" opacity="0.6"/><rect x="512" y="217" width="1" height="1" fill="#f0ec00" opacity="0.5"/><rect x="514" y="215" width="1" height="1" fill="#f0ec00" opacity="0.6"/><rect x="515" y="217" width="1" height="1" fill="#f0ec00" opacity="0.5"/><rect x="517" y="215" width="1" height="1" fill="#f0ec00" opacity="0.6"/><rect x="518" y="217" width="1" height="1" fill="#f0ec00" opacity="0.5"/><rect x="520" y="215" width="1" height="1" fill="#f0ec00" opacity="0.6"/><rect x="521" y="217" width="1" height="1" fill="#f0ec00" opacity="0.5"/><rect x="523" y="215" width="1" height="1" fill="#f0ec00" opacity="0.6"/><rect x="524" y="217" width="1" height="1" fill="#f0ec00" opacity="0.5"/><rect x="526" y="215" width="1" height="1" fill="#f0ec00" opacity="0.6"/><rect x="527" y="217" width="1" height="1" fill="#f0ec00" opacity="0.5"/><rect x="529" y="215" width="1" height="1" fill="#f0ec00" opacity="0.6"/><rect x="530" y="217" width="1" height="1" fill="#f0ec00" opacity="0.5"/><rect x="532" y="215" width="1" height="1" fill="#f0ec00" opacity="0.6"/><rect x="533" y="217" width="1" height="1" fill="#f0ec00" opacity="0.5"/><rect x="535" y="215" width="1" height="1" fill="#f0ec00" opacity="0.6"/><rect x="536" y="217" width="1" height="1" fill="#f0ec00" opacity="0.5"/><rect x="538" y="215" width="1" height="1" fill="#f0ec00" opacity="0.6"/><rect x="539" y="217" width="1" height="1" fill="#f0ec00" opacity="0.5"/><rect x="541" y="215" width="1" height="1" fill="#f0ec00" opacity="0.6"/><rect x="542" y="217" width="1" height="1" fill="#f0ec00" opacity="0.5"/><rect x="544" y="215" width="1" height="1" fill="#f0ec00" opacity="0.6"/><rect x="545" y="217" width="1" height="1" fill="#f0ec00" opacity="0.5"/><rect x="547" y="215" width="1" height="1" fill="#f0ec00" opacity="0.6"/><rect x="548" y="217" width="1" height="1" fill="#f0ec00" opacity="0.5"/><rect x="550" y="215" width="1" height="1" fill="#f0ec00" opacity="0.6"/><rect x="551" y="217" width="1" height="1" fill="#f0ec00" opacity="0.5"/><rect x="553" y="215" width="1" height="1" fill="#f0ec00" opacity="0.6"/><rect x="554" y="217" width="1" height="1" fill="#f0ec00" opacity="0.5"/><rect x="556" y="215" width="1" height="1" fill="#f0ec00" opacity="0.6"/><rect x="557" y="217" width="1" height="1" fill="#f0ec00" opacity="0.5"/><rect x="559" y="215" width="1" height="1" fill="#f0ec00" opacity="0.6"/><rect x="560" y="217" width="1" height="1" fill="#f0ec00" opacity="0.5"/><rect x="562" y="215" width="1" height="1" fill="#f0ec00" opacity="0.6"/><rect x="563" y="217" width="1" height="1" fill="#f0ec00" opacity="0.5"/><rect x="565" y="215" width="1" height="1" fill="#f0ec00" opacity="0.6"/><rect x="566" y="217" width="1" height="1" fill="#f0ec00" opacity="0.5"/><rect x="568" y="215" width="1" height="1" fill="#f0ec00" opacity="0.6"/><rect x="569" y="217" width="1" height="1" fill="#f0ec00" opacity="0.5"/><rect x="571" y="215" width="1" height="1" fill="#f0ec00" opacity="0.6"/><rect x="572" y="217" width="1" height="1" fill="#f0ec00" opacity="0.5"/><rect x="574" y="215" width="1" height="1" fill="#f0ec00" opacity="0.6"/><rect x="575" y="217" width="1" height="1" fill="#f0ec00" opacity="0.5"/><rect x="577" y="215" width="1" height="1" fill="#f0ec00" opacity="0.6"/><rect x="578" y="217" width="1" height="1" fill="#f0ec00" opacity="0.5"/><rect x="580" y="215" width="1" height="1" fill="#f0ec00" opacity="0.6"/><rect x="581" y="217" width="1" height="1" fill="#f0ec00" opacity="0.5"/><rect x="583" y="215" width="1" height="1" fill="#f0ec00" opacity="0.6"/><rect x="584" y="217" width="1" height="1" fill="#f0ec00" opacity="0.5"/><rect x="586" y="215" width="1" height="1" fill="#f0ec00" opacity="0.6"/><rect x="587" y="217" width="1" height="1" fill="#f0ec00" opacity="0.5"/><rect x="589" y="215" width="1" height="1" fill="#f0ec00" opacity="0.6"/><rect x="590" y="217" width="1" height="1" fill="#f0ec00" opacity="0.5"/><rect x="592" y="215" width="1" height="1" fill="#f0ec00" opacity="0.6"/><rect x="593" y="217" width="1" height="1" fill="#f0ec00" opacity="0.5"/><rect x="595" y="215" width="1" height="1" fill="#f0ec00" opacity="0.6"/><rect x="596" y="217" width="1" height="1" fill="#f0ec00" opacity="0.5"/><rect x="598" y="215" width="1" height="1" fill="#f0ec00" opacity="0.6"/><rect x="599" y="217" width="1" height="1" fill="#f0ec00" opacity="0.5"/><rect x="601" y="215" width="1" height="1" fill="#f0ec00" opacity="0.6"/><rect x="602" y="217" width="1" height="1" fill="#f0ec00" opacity="0.5"/><rect x="604" y="215" width="1" height="1" fill="#f0ec00" opacity="0.6"/><rect x="605" y="217" width="1" height="1" fill="#f0ec00" opacity="0.5"/><rect x="607" y="215" width="1" height="1" fill="#f0ec00" opacity="0.6"/><rect x="608" y="217" width="1" height="1" fill="#f0ec00" opacity="0.5"/><rect x="610" y="215" width="1" height="1" fill="#f0ec00" opacity="0.6"/><rect x="611" y="217" width="1" height="1" fill="#f0ec00" opacity="0.5"/><rect x="613" y="215" width="1" height="1" fill="#f0ec00" opacity="0.6"/><rect x="614" y="217" width="1" height="1" fill="#f0ec00" opacity="0.5"/><rect x="616" y="215" width="1" height="1" fill="#f0ec00" opacity="0.6"/><rect x="617" y="217" width="1" height="1" fill="#f0ec00" opacity="0.5"/><rect x="619" y="215" width="1" height="1" fill="#f0ec00" opacity="0.6"/><rect x="620" y="217" width="1" height="1" fill="#f0ec00" opacity="0.5"/><rect x="622" y="215" width="1" height="1" fill="#f0ec00" opacity="0.6"/><rect x="623" y="217" width="1" height="1" fill="#f0ec00" opacity="0.5"/><rect x="625" y="215" width="1" height="1" fill="#f0ec00" opacity="0.6"/><rect x="626" y="217" width="1" height="1" fill="#f0ec00" opacity="0.5"/><rect x="628" y="215" width="1" height="1" fill="#f0ec00" opacity="0.6"/><rect x="629" y="217" width="1" height="1" fill="#f0ec00" opacity="0.5"/><rect x="631" y="215" width="1" height="1" fill="#f0ec00" opacity="0.6"/><rect x="632" y="217" width="1" height="1" fill="#f0ec00" opacity="0.5"/><rect x="634" y="215" width="1" height="1" fill="#f0ec00" opacity="0.6"/><rect x="635" y="217" width="1" height="1" fill="#f0ec00" opacity="0.5"/><rect x="637" y="215" width="1" height="1" fill="#f0ec00" opacity="0.6"/><rect x="638" y="217" width="1" height="1" fill="#f0ec00" opacity="0.5"/><rect x="640" y="215" width="1" height="1" fill="#f0ec00" opacity="0.6"/><rect x="641" y="217" width="1" height="1" fill="#f0ec00" opacity="0.5"/><rect x="643" y="215" width="1" height="1" fill="#f0ec00" opacity="0.6"/><rect x="644" y="217" width="1" height="1" fill="#f0ec00" opacity="0.5"/><rect x="646" y="215" width="1" height="1" fill="#f0ec00" opacity="0.6"/><rect x="647" y="217" width="1" height="1" fill="#f0ec00" opacity="0.5"/><rect x="649" y="215" width="1" height="1" fill="#f0ec00" opacity="0.6"/><rect x="650" y="217" width="1" height="1" fill="#f0ec00" opacity="0.5"/><rect x="652" y="215" width="1" height="1" fill="#f0ec00" opacity="0.6"/><rect x="653" y="217" width="1" height="1" fill="#f0ec00" opacity="0.5"/><rect x="655" y="215" width="1" height="1" fill="#f0ec00" opacity="0.6"/><rect x="656" y="217" width="1" height="1" fill="#f0ec00" opacity="0.5"/><rect x="658" y="215" width="1" height="1" fill="#f0ec00" opacity="0.6"/><rect x="659" y="217" width="1" height="1" fill="#f0ec00" opacity="0.5"/><rect x="661" y="215" width="1" height="1" fill="#f0ec00" opacity="0.6"/><rect x="662" y="217" width="1" height="1" fill="#f0ec00" opacity="0.5"/><rect x="664" y="215" width="1" height="1" fill="#f0ec00" opacity="0.6"/><rect x="665" y="217" width="1" height="1" fill="#f0ec00" opacity="0.5"/><rect x="667" y="215" width="1" height="1" fill="#f0ec00" opacity="0.6"/><rect x="668" y="217" width="1" height="1" fill="#f0ec00" opacity="0.5"/><rect x="670" y="215" width="1" height="1" fill="#f0ec00" opacity="0.6"/><rect x="671" y="217" width="1" height="1" fill="#f0ec00" opacity="0.5"/><rect x="673" y="215" width="1" height="1" fill="#f0ec00" opacity="0.6"/><rect x="674" y="217" width="1" height="1" fill="#f0ec00" opacity="0.5"/><rect x="676" y="215" width="1" height="1" fill="#f0ec00" opacity="0.6"/><rect x="677" y="217" width="1" height="1" fill="#f0ec00" opacity="0.5"/><rect x="679" y="215" width="1" height="1" fill="#f0ec00" opacity="0.6"/><rect x="680" y="217" width="1" height="1" fill="#f0ec00" opacity="0.5"/><rect x="682" y="215" width="1" height="1" fill="#f0ec00" opacity="0.6"/><rect x="683" y="217" width="1" height="1" fill="#f0ec00" opacity="0.5"/><rect x="685" y="215" width="1" height="1" fill="#f0ec00" opacity="0.6"/><rect x="686" y="217" width="1" height="1" fill="#f0ec00" opacity="0.5"/><rect x="688" y="215" width="1" height="1" fill="#f0ec00" opacity="0.6"/><rect x="689" y="217" width="1" height="1" fill="#f0ec00" opacity="0.5"/><rect x="691" y="215" width="1" height="1" fill="#f0ec00" opacity="0.6"/><rect x="692" y="217" width="1" height="1" fill="#f0ec00" opacity="0.5"/><rect x="694" y="215" width="1" height="1" fill="#f0ec00" opacity="0.6"/><rect x="695" y="217" width="1" height="1" fill="#f0ec00" opacity="0.5"/><rect x="697" y="215" width="1" height="1" fill="#f0ec00" opacity="0.6"/><rect x="698" y="217" width="1" height="1" fill="#f0ec00" opacity="0.5"/><rect x="700" y="215" width="1" height="1" fill="#f0ec00" opacity="0.6"/><rect x="701" y="217" width="1" height="1" fill="#f0ec00" opacity="0.5"/><rect x="703" y="215" width="1" height="1" fill="#f0ec00" opacity="0.6"/><rect x="704" y="217" width="1" height="1" fill="#f0ec00" opacity="0.5"/><rect x="706" y="215" width="1" height="1" fill="#f0ec00" opacity="0.6"/><rect x="707" y="217" width="1" height="1" fill="#f0ec00" opacity="0.5"/><rect x="709" y="215" width="1" height="1" fill="#f0ec00" opacity="0.6"/><rect x="710" y="217" width="1" height="1" fill="#f0ec00" opacity="0.5"/><rect x="712" y="215" width="1" height="1" fill="#f0ec00" opacity="0.6"/><rect x="713" y="217" width="1" height="1" fill="#f0ec00" opacity="0.5"/><rect x="715" y="215" width="1" height="1" fill="#f0ec00" opacity="0.6"/><rect x="716" y="217" width="1" height="1" fill="#f0ec00" opacity="0.5"/><rect x="718" y="215" width="1" height="1" fill="#f0ec00" opacity="0.6"/><rect x="719" y="217" width="1" height="1" fill="#f0ec00" opacity="0.5"/><rect x="721" y="215" width="1" height="1" fill="#f0ec00" opacity="0.6"/><rect x="722" y="217" width="1" height="1" fill="#f0ec00" opacity="0.5"/><rect x="724" y="215" width="1" height="1" fill="#f0ec00" opacity="0.6"/><rect x="725" y="217" width="1" height="1" fill="#f0ec00" opacity="0.5"/><rect x="727" y="215" width="1" height="1" fill="#f0ec00" opacity="0.6"/><rect x="728" y="217" width="1" height="1" fill="#f0ec00" opacity="0.5"/><rect x="730" y="215" width="1" height="1" fill="#f0ec00" opacity="0.6"/><rect x="731" y="217" width="1" height="1" fill="#f0ec00" opacity="0.5"/><rect x="733" y="215" width="1" height="1" fill="#f0ec00" opacity="0.6"/><rect x="734" y="217" width="1" height="1" fill="#f0ec00" opacity="0.5"/><rect x="736" y="215" width="1" height="1" fill="#f0ec00" opacity="0.6"/><rect x="737" y="217" width="1" height="1" fill="#f0ec00" opacity="0.5"/><rect x="739" y="215" width="1" height="1" fill="#f0ec00" opacity="0.6"/><rect x="740" y="217" width="1" height="1" fill="#f0ec00" opacity="0.5"/><rect x="742" y="215" width="1" height="1" fill="#f0ec00" opacity="0.6"/><rect x="743" y="217" width="1" height="1" fill="#f0ec00" opacity="0.5"/><rect x="745" y="215" width="1" height="1" fill="#f0ec00" opacity="0.6"/><rect x="746" y="217" width="1" height="1" fill="#f0ec00" opacity="0.5"/><rect x="748" y="215" width="1" height="1" fill="#f0ec00" opacity="0.6"/><rect x="749" y="217" width="1" height="1" fill="#f0ec00" opacity="0.5"/><rect x="751" y="215" width="1" height="1" fill="#f0ec00" opacity="0.6"/><rect x="752" y="217" width="1" height="1" fill="#f0ec00" opacity="0.5"/><rect x="754" y="215" width="1" height="1" fill="#f0ec00" opacity="0.6"/><rect x="755" y="217" width="1" height="1" fill="#f0ec00" opacity="0.5"/><rect x="757" y="215" width="1" height="1" fill="#f0ec00" opacity="0.6"/><rect x="758" y="217" width="1" height="1" fill="#f0ec00" opacity="0.5"/><rect x="760" y="215" width="1" height="1" fill="#f0ec00" opacity="0.6"/><rect x="761" y="217" width="1" height="1" fill="#f0ec00" opacity="0.5"/><rect x="763" y="215" width="1" height="1" fill="#f0ec00" opacity="0.6"/><rect x="764" y="217" width="1" height="1" fill="#f0ec00" opacity="0.5"/><rect x="766" y="215" width="1" height="1" fill="#f0ec00" opacity="0.6"/><rect x="767" y="217" width="1" height="1" fill="#f0ec00" opacity="0.5"/><rect x="769" y="215" width="1" height="1" fill="#f0ec00" opacity="0.6"/><rect x="770" y="217" width="1" height="1" fill="#f0ec00" opacity="0.5"/><rect x="772" y="215" width="1" height="1" fill="#f0ec00" opacity="0.6"/><rect x="773" y="217" width="1" height="1" fill="#f0ec00" opacity="0.5"/><rect x="775" y="215" width="1" height="1" fill="#f0ec00" opacity="0.6"/><rect x="776" y="217" width="1" height="1" fill="#f0ec00" opacity="0.5"/><rect x="778" y="215" width="1" height="1" fill="#f0ec00" opacity="0.6"/><rect x="779" y="217" width="1" height="1" fill="#f0ec00" opacity="0.5"/><rect x="781" y="215" width="1" height="1" fill="#f0ec00" opacity="0.6"/><rect x="782" y="217" width="1" height="1" fill="#f0ec00" opacity="0.5"/><rect x="784" y="215" width="1" height="1" fill="#f0ec00" opacity="0.6"/><rect x="785" y="217" width="1" height="1" fill="#f0ec00" opacity="0.5"/><rect x="787" y="215" width="1" height="1" fill="#f0ec00" opacity="0.6"/><rect x="788" y="217" width="1" height="1" fill="#f0ec00" opacity="0.5"/><rect x="790" y="215" width="1" height="1" fill="#f0ec00" opacity="0.6"/><rect x="791" y="217" width="1" height="1" fill="#f0ec00" opacity="0.5"/><rect x="793" y="215" width="1" height="1" fill="#f0ec00" opacity="0.6"/><rect x="794" y="217" width="1" height="1" fill="#f0ec00" opacity="0.5"/><rect x="796" y="215" width="1" height="1" fill="#f0ec00" opacity="0.6"/><rect x="797" y="217" width="1" height="1" fill="#f0ec00" opacity="0.5"/><rect x="799" y="215" width="1" height="1" fill="#f0ec00" opacity="0.6"/><rect x="800" y="217" width="1" height="1" fill="#f0ec00" opacity="0.5"/><rect x="802" y="215" width="1" height="1" fill="#f0ec00" opacity="0.6"/><rect x="803" y="217" width="1" height="1" fill="#f0ec00" opacity="0.5"/><rect x="805" y="215" width="1" height="1" fill="#f0ec00" opacity="0.6"/><rect x="806" y="217" width="1" height="1" fill="#f0ec00" opacity="0.5"/><rect x="808" y="215" width="1" height="1" fill="#f0ec00" opacity="0.6"/><rect x="809" y="217" width="1" height="1" fill="#f0ec00" opacity="0.5"/><rect x="811" y="215" width="1" height="1" fill="#f0ec00" opacity="0.6"/><rect x="812" y="217" width="1" height="1" fill="#f0ec00" opacity="0.5"/><rect x="814" y="215" width="1" height="1" fill="#f0ec00" opacity="0.6"/><rect x="815" y="217" width="1" height="1" fill="#f0ec00" opacity="0.5"/><rect x="817" y="215" width="1" height="1" fill="#f0ec00" opacity="0.6"/><rect x="818" y="217" width="1" height="1" fill="#f0ec00" opacity="0.5"/><rect x="820" y="215" width="1" height="1" fill="#f0ec00" opacity="0.6"/><rect x="821" y="217" width="1" height="1" fill="#f0ec00" opacity="0.5"/><rect x="823" y="215" width="1" height="1" fill="#f0ec00" opacity="0.6"/><rect x="824" y="217" width="1" height="1" fill="#f0ec00" opacity="0.5"/><rect x="826" y="215" width="1" height="1" fill="#f0ec00" opacity="0.6"/><rect x="827" y="217" width="1" height="1" fill="#f0ec00" opacity="0.5"/><rect x="829" y="215" width="1" height="1" fill="#f0ec00" opacity="0.6"/><rect x="830" y="217" width="1" height="1" fill="#f0ec00" opacity="0.5"/><rect x="832" y="215" width="1" height="1" fill="#f0ec00" opacity="0.6"/><rect x="833" y="217" width="1" height="1" fill="#f0ec00" opacity="0.5"/><rect x="835" y="215" width="1" height="1" fill="#f0ec00" opacity="0.6"/><rect x="836" y="217" width="1" height="1" fill="#f0ec00" opacity="0.5"/><rect x="838" y="215" width="1" height="1" fill="#f0ec00" opacity="0.6"/><rect x="839" y="217" width="1" height="1" fill="#f0ec00" opacity="0.5"/><rect x="841" y="215" width="1" height="1" fill="#f0ec00" opacity="0.6"/><rect x="842" y="217" width="1" height="1" fill="#f0ec00" opacity="0.5"/><rect x="844" y="215" width="1" height="1" fill="#f0ec00" opacity="0.6"/><rect x="845" y="217" width="1" height="1" fill="#f0ec00" opacity="0.5"/><rect x="847" y="215" width="1" height="1" fill="#f0ec00" opacity="0.6"/><rect x="848" y="217" width="1" height="1" fill="#f0ec00" opacity="0.5"/><rect x="850" y="215" width="1" height="1" fill="#f0ec00" opacity="0.6"/><rect x="851" y="217" width="1" height="1" fill="#f0ec00" opacity="0.5"/><rect x="853" y="215" width="1" height="1" fill="#f0ec00" opacity="0.6"/><rect x="854" y="217" width="1" height="1" fill="#f0ec00" opacity="0.5"/><rect x="856" y="215" width="1" height="1" fill="#f0ec00" opacity="0.6"/><rect x="857" y="217" width="1" height="1" fill="#f0ec00" opacity="0.5"/><rect x="859" y="215" width="1" height="1" fill="#f0ec00" opacity="0.6"/><rect x="860" y="217" width="1" height="1" fill="#f0ec00" opacity="0.5"/><rect x="862" y="215" width="1" height="1" fill="#f0ec00" opacity="0.6"/><rect x="863" y="217" width="1" height="1" fill="#f0ec00" opacity="0.5"/><rect x="865" y="215" width="1" height="1" fill="#f0ec00" opacity="0.6"/><rect x="866" y="217" width="1" height="1" fill="#f0ec00" opacity="0.5"/><rect x="868" y="215" width="1" height="1" fill="#f0ec00" opacity="0.6"/><rect x="869" y="217" width="1" height="1" fill="#f0ec00" opacity="0.5"/><rect x="871" y="215" width="1" height="1" fill="#f0ec00" opacity="0.6"/><rect x="872" y="217" width="1" height="1" fill="#f0ec00" opacity="0.5"/><rect x="874" y="215" width="1" height="1" fill="#f0ec00" opacity="0.6"/><rect x="875" y="217" width="1" height="1" fill="#f0ec00" opacity="0.5"/><rect x="877" y="215" width="1" height="1" fill="#f0ec00" opacity="0.6"/><rect x="878" y="217" width="1" height="1" fill="#f0ec00" opacity="0.5"/><rect x="880" y="215" width="1" height="1" fill="#f0ec00" opacity="0.6"/><rect x="881" y="217" width="1" height="1" fill="#f0ec00" opacity="0.5"/><rect x="883" y="215" width="1" height="1" fill="#f0ec00" opacity="0.6"/><rect x="884" y="217" width="1" height="1" fill="#f0ec00" opacity="0.5"/><rect x="886" y="215" width="1" height="1" fill="#f0ec00" opacity="0.6"/><rect x="887" y="217" width="1" height="1" fill="#f0ec00" opacity="0.5"/><rect x="889" y="215" width="1" height="1" fill="#f0ec00" opacity="0.6"/><rect x="890" y="217" width="1" height="1" fill="#f0ec00" opacity="0.5"/><rect x="892" y="215" width="1" height="1" fill="#f0ec00" opacity="0.6"/><rect x="893" y="217" width="1" height="1" fill="#f0ec00" opacity="0.5"/><rect x="895" y="215" width="1" height="1" fill="#f0ec00" opacity="0.6"/><rect x="896" y="217" width="1" height="1" fill="#f0ec00" opacity="0.5"/><rect x="898" y="215" width="1" height="1" fill="#f0ec00" opacity="0.6"/><rect x="899" y="217" width="1" height="1" fill="#f0ec00" opacity="0.5"/><rect x="901" y="215" width="1" height="1" fill="#f0ec00" opacity="0.6"/><rect x="902" y="217" width="1" height="1" fill="#f0ec00" opacity="0.5"/><rect x="904" y="215" width="1" height="1" fill="#f0ec00" opacity="0.6"/><rect x="905" y="217" width="1" height="1" fill="#f0ec00" opacity="0.5"/><rect x="907" y="215" width="1" height="1" fill="#f0ec00" opacity="0.6"/><rect x="908" y="217" width="1" height="1" fill="#f0ec00" opacity="0.5"/><rect x="910" y="215" width="1" height="1" fill="#f0ec00" opacity="0.6"/><rect x="911" y="217" width="1" height="1" fill="#f0ec00" opacity="0.5"/><rect x="913" y="215" width="1" height="1" fill="#f0ec00" opacity="0.6"/><rect x="914" y="217" width="1" height="1" fill="#f0ec00" opacity="0.5"/><rect x="916" y="215" width="1" height="1" fill="#f0ec00" opacity="0.6"/><rect x="917" y="217" width="1" height="1" fill="#f0ec00" opacity="0.5"/><rect x="919" y="215" width="1" height="1" fill="#f0ec00" opacity="0.6"/><rect x="920" y="217" width="1" height="1" fill="#f0ec00" opacity="0.5"/><rect x="922" y="215" width="1" height="1" fill="#f0ec00" opacity="0.6"/><rect x="923" y="217" width="1" height="1" fill="#f0ec00" opacity="0.5"/><rect x="925" y="215" width="1" height="1" fill="#f0ec00" opacity="0.6"/><rect x="926" y="217" width="1" height="1" fill="#f0ec00" opacity="0.5"/><rect x="928" y="215" width="1" height="1" fill="#f0ec00" opacity="0.6"/><rect x="929" y="217" width="1" height="1" fill="#f0ec00" opacity="0.5"/><rect x="931" y="215" width="1" height="1" fill="#f0ec00" opacity="0.6"/><rect x="932" y="217" width="1" height="1" fill="#f0ec00" opacity="0.5"/><rect x="934" y="215" width="1" height="1" fill="#f0ec00" opacity="0.6"/><rect x="935" y="217" width="1" height="1" fill="#f0ec00" opacity="0.5"/><rect x="937" y="215" width="1" height="1" fill="#f0ec00" opacity="0.6"/><rect x="938" y="217" width="1" height="1" fill="#f0ec00" opacity="0.5"/><rect x="940" y="215" width="1" height="1" fill="#f0ec00" opacity="0.6"/><rect x="941" y="217" width="1" height="1" fill="#f0ec00" opacity="0.5"/><rect x="943" y="215" width="1" height="1" fill="#f0ec00" opacity="0.6"/><rect x="944" y="217" width="1" height="1" fill="#f0ec00" opacity="0.5"/><rect x="946" y="215" width="1" height="1" fill="#f0ec00" opacity="0.6"/><rect x="947" y="217" width="1" height="1" fill="#f0ec00" opacity="0.5"/><rect x="949" y="215" width="1" height="1" fill="#f0ec00" opacity="0.6"/><rect x="950" y="217" width="1" height="1" fill="#f0ec00" opacity="0.5"/><rect x="952" y="215" width="1" height="1" fill="#f0ec00" opacity="0.6"/><rect x="953" y="217" width="1" height="1" fill="#f0ec00" opacity="0.5"/><rect x="955" y="215" width="1" height="1" fill="#f0ec00" opacity="0.6"/><rect x="956" y="217" width="1" height="1" fill="#f0ec00" opacity="0.5"/><rect x="958" y="215" width="1" height="1" fill="#f0ec00" opacity="0.6"/><rect x="959" y="217" width="1" height="1" fill="#f0ec00" opacity="0.5"/><rect x="961" y="215" width="1" height="1" fill="#f0ec00" opacity="0.6"/><rect x="962" y="217" width="1" height="1" fill="#f0ec00" opacity="0.5"/><rect x="964" y="215" width="1" height="1" fill="#f0ec00" opacity="0.6"/><rect x="965" y="217" width="1" height="1" fill="#f0ec00" opacity="0.5"/><rect x="967" y="215" width="1" height="1" fill="#f0ec00" opacity="0.6"/><rect x="968" y="217" width="1" height="1" fill="#f0ec00" opacity="0.5"/><rect x="970" y="215" width="1" height="1" fill="#f0ec00" opacity="0.6"/><rect x="971" y="217" width="1" height="1" fill="#f0ec00" opacity="0.5"/><rect x="973" y="215" width="1" height="1" fill="#f0ec00" opacity="0.6"/><rect x="974" y="217" width="1" height="1" fill="#f0ec00" opacity="0.5"/><rect x="976" y="215" width="1" height="1" fill="#f0ec00" opacity="0.6"/><rect x="977" y="217" width="1" height="1" fill="#f0ec00" opacity="0.5"/><rect x="979" y="215" width="1" height="1" fill="#f0ec00" opacity="0.6"/><rect x="980" y="217" width="1" height="1" fill="#f0ec00" opacity="0.5"/><rect x="982" y="215" width="1" height="1" fill="#f0ec00" opacity="0.6"/><rect x="983" y="217" width="1" height="1" fill="#f0ec00" opacity="0.5"/><rect x="985" y="215" width="1" height="1" fill="#f0ec00" opacity="0.6"/><rect x="986" y="217" width="1" height="1" fill="#f0ec00" opacity="0.5"/><rect x="988" y="215" width="1" height="1" fill="#f0ec00" opacity="0.6"/><rect x="989" y="217" width="1" height="1" fill="#f0ec00" opacity="0.5"/><rect x="991" y="215" width="1" height="1" fill="#f0ec00" opacity="0.6"/><rect x="992" y="217" width="1" height="1" fill="#f0ec00" opacity="0.5"/><rect x="994" y="215" width="1" height="1" fill="#f0ec00" opacity="0.6"/><rect x="995" y="217" width="1" height="1" fill="#f0ec00" opacity="0.5"/><rect x="997" y="215" width="1" height="1" fill="#f0ec00" opacity="0.6"/><rect x="998" y="217" width="1" height="1" fill="#f0ec00" opacity="0.5"/><rect x="1000" y="215" width="1" height="1" fill="#f0ec00" opacity="0.6"/><rect x="1001" y="217" width="1" height="1" fill="#f0ec00" opacity="0.5"/><rect x="1003" y="215" width="1" height="1" fill="#f0ec00" opacity="0.6"/><rect x="1004" y="217" width="1" height="1" fill="#f0ec00" opacity="0.5"/><rect x="1006" y="215" width="1" height="1" fill="#f0ec00" opacity="0.6"/><rect x="1007" y="217" width="1" height="1" fill="#f0ec00" opacity="0.5"/><rect x="1009" y="215" width="1" height="1" fill="#f0ec00" opacity="0.6"/><rect x="1010" y="217" width="1" height="1" fill="#f0ec00" opacity="0.5"/><defs><pattern id="cyb" x="12" y="348" width="4" height="6" patternUnits="userSpaceOnUse"><rect x="0" y="0" width="4" height="6" fill="#08b4bc"/><rect x="0" y="0" width="1" height="1" fill="#00e8f0"/><rect x="2" y="0" width="1" height="1" fill="#04c8d0"/><rect x="3" y="0" width="1" height="1" fill="#032c30"/><rect x="1" y="1" width="1" height="3" fill="#00e8f0"/><rect x="3" y="2" width="1" height="2" fill="#0898a0"/><rect x="0" y="4" width="1" height="2" fill="#00f0f8"/><rect x="2" y="4" width="1" height="2" fill="#00f0f8"/><rect x="1" y="4" width="1" height="2" fill="#08a8b0"/><rect x="3" y="4" width="1" height="2" fill="#08a8b0"/></pattern></defs><rect x="12" y="348" width="1000" height="6" fill="url(#cyb)"/><rect x="125.5" y="133.5" width="14" height="96" fill="#23222f" stroke="#4a4878"/><rect x="125" y="155" width="15" height="15" fill="#249cae"/><rect x="125" y="155" width="1" height="15" fill="#3ee8ff"/><rect x="131" y="155" width="1" height="15" fill="#3ee8ff"/><rect x="132" y="155" width="1" height="15" fill="#3ee8ff"/><rect x="138" y="155" width="1" height="15" fill="#3ee8ff"/><rect x="125" y="170" width="15" height="47" fill="#a9a5b9"/><rect x="125" y="170" width="1" height="47" fill="#dcd4f4"/><rect x="131" y="170" width="1" height="47" fill="#b8b030"/><rect x="139" y="170" width="1" height="47" fill="#b8b030"/><rect x="132" y="170" width="1" height="47" fill="#b0e4f0"/><rect x="125" y="170" width="1" height="1" fill="#f0e860" opacity="0.9"/><rect x="127" y="171" width="1" height="1" fill="#f0e860" opacity="0.9"/><rect x="129" y="170" width="1" height="1" fill="#f0e860" opacity="0.9"/><rect x="131" y="171" width="1" height="1" fill="#f0e860" opacity="0.9"/><rect x="133" y="170" width="1" height="1" fill="#f0e860" opacity="0.9"/><rect x="135" y="171" width="1" height="1" fill="#f0e860" opacity="0.9"/><rect x="137" y="170" width="1" height="1" fill="#f0e860" opacity="0.9"/><rect x="125" y="217" width="15" height="6" fill="#249cae"/><rect x="125" y="217" width="1" height="6" fill="#3ee8ff"/><rect x="131" y="217" width="1" height="6" fill="#3ee8ff"/><rect x="132" y="217" width="1" height="6" fill="#3ee8ff"/><rect x="138" y="217" width="1" height="6" fill="#3ee8ff"/><rect x="110.5" y="218.5" width="13" height="20" fill="#23222f" stroke="#4a4878"/><rect x="110" y="239" width="14" height="84" fill="#28a0b2"/><rect x="110.5" y="239" width="13" height="83.5" fill="none" stroke="#58d0f0"/><rect x="110" y="239" width="1" height="71" fill="#3ee8ff"/><rect x="112" y="239" width="1" height="71" fill="#3ee8ff"/><rect x="117" y="239" width="1" height="71" fill="#3ee8ff"/><rect x="119" y="239" width="1" height="71" fill="#3ee8ff"/><rect x="123" y="239" width="1" height="71" fill="#3ee8ff"/><rect x="111" y="241" width="1" height="9" fill="#1a2a3a"/><rect x="118" y="241" width="1" height="12" fill="#1a2a3a"/><path d="M111,250 Q113,258 117,258 Q121,258 122,253" fill="none" stroke="#3ee8ff" stroke-width="1.4" shape-rendering="auto"/><rect x="123" y="252" width="1" height="70" fill="#d0c8f0" opacity="0.7"/><rect x="110" y="323" width="15" height="25" fill="#0d8686"/><rect x="110" y="349" width="15" height="5" fill="#0a7070" opacity="0.8"/><rect x="121" y="146" width="36" height="8" rx="4" fill="#f6f0f6" shape-rendering="auto"/><rect x="122" y="147" width="1" height="6" fill="#2040b0" opacity="0.8"/><rect x="123" y="147" width="1" height="6" fill="#c08050" opacity="0.5"/><rect x="124" y="147" width="1" height="1" fill="#c040ff" opacity="0.8"/><rect x="129" y="147" width="1" height="1" fill="#404040" opacity="0.8"/><rect x="133" y="147" width="1" height="1" fill="#a040ff" opacity="0.7"/><rect x="145" y="150" width="1" height="2" fill="#6080e0" opacity="0.8"/><rect x="148" y="150" width="1" height="2" fill="#e08030" opacity="0.8"/><rect x="152" y="147" width="1" height="1" fill="#602020" opacity="0.8"/><rect x="152" y="152" width="1" height="1" fill="#602020" opacity="0.8"/><rect x="150" y="149" width="1" height="1" fill="#404050" opacity="0.8"/><rect x="156" y="148" width="1" height="5" fill="#d07020" opacity="0.7"/><rect x="120" y="155" width="38" height="1" fill="#f0f0f0"/><rect x="105" y="231" width="36" height="8" rx="4" fill="#f6f0f6" shape-rendering="auto"/><rect x="106" y="232" width="1" height="6" fill="#2040b0" opacity="0.8"/><rect x="107" y="232" width="1" height="6" fill="#c08050" opacity="0.5"/><rect x="108" y="232" width="1" height="1" fill="#c040ff" opacity="0.8"/><rect x="113" y="232" width="1" height="1" fill="#404040" opacity="0.8"/><rect x="117" y="232" width="1" height="1" fill="#a040ff" opacity="0.7"/><rect x="129" y="235" width="1" height="2" fill="#6080e0" opacity="0.8"/><rect x="132" y="235" width="1" height="2" fill="#e08030" opacity="0.8"/><rect x="136" y="232" width="1" height="1" fill="#602020" opacity="0.8"/><rect x="136" y="237" width="1" height="1" fill="#602020" opacity="0.8"/><rect x="134" y="234" width="1" height="1" fill="#404050" opacity="0.8"/><rect x="140" y="233" width="1" height="5" fill="#d07020" opacity="0.7"/><rect x="104" y="240" width="38" height="1" fill="#f0f0f0"/><rect x="440.5" y="133.5" width="16" height="96" fill="#23222f" stroke="#4a4878"/><rect x="440" y="155" width="17" height="15" fill="#249cae"/><rect x="440" y="155" width="1" height="15" fill="#3ee8ff"/><rect x="444" y="155" width="1" height="15" fill="#3ee8ff"/><rect x="450" y="155" width="1" height="15" fill="#3ee8ff"/><rect x="456" y="155" width="1" height="15" fill="#3ee8ff"/><rect x="440" y="170" width="17" height="47" fill="#a9a5b9"/><rect x="440" y="170" width="1" height="47" fill="#dcd4f4"/><rect x="443" y="170" width="1" height="47" fill="#b8b030"/><rect x="450" y="170" width="1" height="47" fill="#b8b030"/><rect x="456" y="170" width="1" height="47" fill="#b8b030"/><rect x="444" y="170" width="1" height="47" fill="#b0e4f0"/><rect x="440" y="170" width="1" height="1" fill="#f0e860" opacity="0.9"/><rect x="442" y="171" width="1" height="1" fill="#f0e860" opacity="0.9"/><rect x="444" y="170" width="1" height="1" fill="#f0e860" opacity="0.9"/><rect x="446" y="171" width="1" height="1" fill="#f0e860" opacity="0.9"/><rect x="448" y="170" width="1" height="1" fill="#f0e860" opacity="0.9"/><rect x="450" y="171" width="1" height="1" fill="#f0e860" opacity="0.9"/><rect x="452" y="170" width="1" height="1" fill="#f0e860" opacity="0.9"/><rect x="454" y="171" width="1" height="1" fill="#f0e860" opacity="0.9"/><rect x="440" y="217" width="17" height="6" fill="#249cae"/><rect x="440" y="217" width="1" height="6" fill="#3ee8ff"/><rect x="444" y="217" width="1" height="6" fill="#3ee8ff"/><rect x="450" y="217" width="1" height="6" fill="#3ee8ff"/><rect x="456" y="217" width="1" height="6" fill="#3ee8ff"/><rect x="425.5" y="218.5" width="13" height="20" fill="#23222f" stroke="#4a4878"/><rect x="425" y="239" width="14" height="84" fill="#28a0b2"/><rect x="425.5" y="239" width="13" height="83.5" fill="none" stroke="#58d0f0"/><rect x="425" y="239" width="1" height="71" fill="#3ee8ff"/><rect x="427" y="239" width="1" height="71" fill="#3ee8ff"/><rect x="429" y="239" width="1" height="71" fill="#3ee8ff"/><rect x="431" y="239" width="1" height="71" fill="#3ee8ff"/><rect x="434" y="239" width="1" height="71" fill="#3ee8ff"/><rect x="436" y="239" width="1" height="71" fill="#3ee8ff"/><rect x="439" y="239" width="1" height="71" fill="#3ee8ff"/><rect x="426" y="241" width="1" height="9" fill="#1a2a3a"/><rect x="428" y="241" width="1" height="13" fill="#1a2a3a"/><rect x="430" y="241" width="1" height="17" fill="#1a2a3a"/><rect x="435" y="241" width="1" height="12" fill="#1a2a3a"/><path d="M426,250 Q428,258 432,258 Q436,258 437,253" fill="none" stroke="#3ee8ff" stroke-width="1.4" shape-rendering="auto"/><rect x="438" y="252" width="1" height="70" fill="#d0c8f0" opacity="0.7"/><rect x="425" y="323" width="15" height="25" fill="#0d8686"/><rect x="425" y="349" width="15" height="5" fill="#0a7070" opacity="0.8"/><rect x="436" y="146" width="38" height="8" rx="4" fill="#f6f0f6" shape-rendering="auto"/><rect x="437" y="147" width="1" height="6" fill="#2040b0" opacity="0.8"/><rect x="438" y="147" width="1" height="6" fill="#c08050" opacity="0.5"/><rect x="439" y="147" width="1" height="1" fill="#c040ff" opacity="0.8"/><rect x="444" y="147" width="1" height="1" fill="#404040" opacity="0.8"/><rect x="448" y="147" width="1" height="1" fill="#a040ff" opacity="0.7"/><rect x="462" y="150" width="1" height="2" fill="#6080e0" opacity="0.8"/><rect x="465" y="150" width="1" height="2" fill="#e08030" opacity="0.8"/><rect x="469" y="147" width="1" height="1" fill="#602020" opacity="0.8"/><rect x="469" y="152" width="1" height="1" fill="#602020" opacity="0.8"/><rect x="467" y="149" width="1" height="1" fill="#404050" opacity="0.8"/><rect x="473" y="148" width="1" height="5" fill="#d07020" opacity="0.7"/><rect x="435" y="155" width="40" height="1" fill="#f0f0f0"/><rect x="420" y="231" width="35" height="8" rx="4" fill="#f6f0f6" shape-rendering="auto"/><rect x="421" y="232" width="1" height="6" fill="#2040b0" opacity="0.8"/><rect x="422" y="232" width="1" height="6" fill="#c08050" opacity="0.5"/><rect x="423" y="232" width="1" height="1" fill="#c040ff" opacity="0.8"/><rect x="428" y="232" width="1" height="1" fill="#404040" opacity="0.8"/><rect x="432" y="232" width="1" height="1" fill="#a040ff" opacity="0.7"/><rect x="443" y="235" width="1" height="2" fill="#6080e0" opacity="0.8"/><rect x="446" y="235" width="1" height="2" fill="#e08030" opacity="0.8"/><rect x="450" y="232" width="1" height="1" fill="#602020" opacity="0.8"/><rect x="450" y="237" width="1" height="1" fill="#602020" opacity="0.8"/><rect x="448" y="234" width="1" height="1" fill="#404050" opacity="0.8"/><rect x="454" y="233" width="1" height="5" fill="#d07020" opacity="0.7"/><rect x="419" y="240" width="37" height="1" fill="#f0f0f0"/><rect x="765.5" y="133.5" width="16" height="96" fill="#23222f" stroke="#4a4878"/><rect x="765" y="155" width="17" height="15" fill="#249cae"/><rect x="765" y="155" width="1" height="15" fill="#3ee8ff"/><rect x="767" y="155" width="1" height="15" fill="#3ee8ff"/><rect x="771" y="155" width="1" height="15" fill="#3ee8ff"/><rect x="773" y="155" width="1" height="15" fill="#3ee8ff"/><rect x="777" y="155" width="1" height="15" fill="#3ee8ff"/><rect x="779" y="155" width="1" height="15" fill="#3ee8ff"/><rect x="781" y="155" width="1" height="15" fill="#3ee8ff"/><rect x="765" y="170" width="17" height="47" fill="#a9a5b9"/><rect x="765" y="170" width="1" height="47" fill="#dcd4f4"/><rect x="767" y="170" width="1" height="47" fill="#b8b030"/><rect x="771" y="170" width="1" height="47" fill="#b8b030"/><rect x="775" y="170" width="1" height="47" fill="#b8b030"/><rect x="781" y="170" width="1" height="47" fill="#b8b030"/><rect x="773" y="170" width="1" height="47" fill="#b0e4f0"/><rect x="777" y="170" width="1" height="47" fill="#b0e4f0"/><rect x="779" y="170" width="1" height="47" fill="#b0e4f0"/><rect x="765" y="170" width="1" height="1" fill="#f0e860" opacity="0.9"/><rect x="767" y="171" width="1" height="1" fill="#f0e860" opacity="0.9"/><rect x="769" y="170" width="1" height="1" fill="#f0e860" opacity="0.9"/><rect x="771" y="171" width="1" height="1" fill="#f0e860" opacity="0.9"/><rect x="773" y="170" width="1" height="1" fill="#f0e860" opacity="0.9"/><rect x="775" y="171" width="1" height="1" fill="#f0e860" opacity="0.9"/><rect x="777" y="170" width="1" height="1" fill="#f0e860" opacity="0.9"/><rect x="779" y="171" width="1" height="1" fill="#f0e860" opacity="0.9"/><rect x="765" y="217" width="17" height="6" fill="#249cae"/><rect x="765" y="217" width="1" height="6" fill="#3ee8ff"/><rect x="767" y="217" width="1" height="6" fill="#3ee8ff"/><rect x="771" y="217" width="1" height="6" fill="#3ee8ff"/><rect x="773" y="217" width="1" height="6" fill="#3ee8ff"/><rect x="777" y="217" width="1" height="6" fill="#3ee8ff"/><rect x="779" y="217" width="1" height="6" fill="#3ee8ff"/><rect x="781" y="217" width="1" height="6" fill="#3ee8ff"/><rect x="750.5" y="218.5" width="13" height="20" fill="#23222f" stroke="#4a4878"/><rect x="750" y="239" width="14" height="84" fill="#28a0b2"/><rect x="750.5" y="239" width="13" height="83.5" fill="none" stroke="#58d0f0"/><rect x="750" y="239" width="1" height="71" fill="#3ee8ff"/><rect x="752" y="239" width="1" height="71" fill="#3ee8ff"/><rect x="757" y="239" width="1" height="71" fill="#3ee8ff"/><rect x="759" y="239" width="1" height="71" fill="#3ee8ff"/><rect x="763" y="239" width="1" height="71" fill="#3ee8ff"/><rect x="751" y="241" width="1" height="9" fill="#1a2a3a"/><rect x="758" y="241" width="1" height="17" fill="#1a2a3a"/><path d="M751,250 Q753,258 757,258 Q761,258 762,253" fill="none" stroke="#3ee8ff" stroke-width="1.4" shape-rendering="auto"/><rect x="763" y="252" width="1" height="70" fill="#d0c8f0" opacity="0.7"/><rect x="750" y="323" width="15" height="25" fill="#0d8686"/><rect x="750" y="349" width="15" height="5" fill="#0a7070" opacity="0.8"/><rect x="760" y="146" width="38" height="8" rx="4" fill="#f6f0f6" shape-rendering="auto"/><rect x="761" y="147" width="1" height="6" fill="#2040b0" opacity="0.8"/><rect x="762" y="147" width="1" height="6" fill="#c08050" opacity="0.5"/><rect x="763" y="147" width="1" height="1" fill="#c040ff" opacity="0.8"/><rect x="768" y="147" width="1" height="1" fill="#404040" opacity="0.8"/><rect x="772" y="147" width="1" height="1" fill="#a040ff" opacity="0.7"/><rect x="786" y="150" width="1" height="2" fill="#6080e0" opacity="0.8"/><rect x="789" y="150" width="1" height="2" fill="#e08030" opacity="0.8"/><rect x="793" y="147" width="1" height="1" fill="#602020" opacity="0.8"/><rect x="793" y="152" width="1" height="1" fill="#602020" opacity="0.8"/><rect x="791" y="149" width="1" height="1" fill="#404050" opacity="0.8"/><rect x="797" y="148" width="1" height="5" fill="#d07020" opacity="0.7"/><rect x="759" y="155" width="40" height="1" fill="#f0f0f0"/><rect x="746" y="231" width="35" height="8" rx="4" fill="#f6f0f6" shape-rendering="auto"/><rect x="747" y="232" width="1" height="6" fill="#2040b0" opacity="0.8"/><rect x="748" y="232" width="1" height="6" fill="#c08050" opacity="0.5"/><rect x="749" y="232" width="1" height="1" fill="#c040ff" opacity="0.8"/><rect x="754" y="232" width="1" height="1" fill="#404040" opacity="0.8"/><rect x="758" y="232" width="1" height="1" fill="#a040ff" opacity="0.7"/><rect x="769" y="235" width="1" height="2" fill="#6080e0" opacity="0.8"/><rect x="772" y="235" width="1" height="2" fill="#e08030" opacity="0.8"/><rect x="776" y="232" width="1" height="1" fill="#602020" opacity="0.8"/><rect x="776" y="237" width="1" height="1" fill="#602020" opacity="0.8"/><rect x="774" y="234" width="1" height="1" fill="#404050" opacity="0.8"/><rect x="780" y="233" width="1" height="5" fill="#d07020" opacity="0.7"/><rect x="745" y="240" width="37" height="1" fill="#f0f0f0"/><path d="M112,354h1v2h1v2h1v2h1v2h-7v-2h1v-2h1v-2h1z" fill="#00e8f0"/><path d="M1012,306h2v-1h2v-1h2v-1h2v8h-2v-1h-2v-1h-2v-1h-2z" fill="#00e8f0"/><rect x="2" y="195" width="10" height="2" fill="#f0ec00"/><rect x="2" y="195" width="1" height="3" fill="#f0ec00"/><rect x="2" y="305" width="10" height="2" fill="#00e8f0"/><rect x="2" y="305" width="1" height="3" fill="#00e8f0"/></svg>
<div class="lbl" style="left:0px;top:182px;font-size:10px;line-height:12px;color:#f0ec00;transform:scaleX(0.82);transform-origin:0 0">C1</div>
<div class="lbl" style="left:0px;top:293px;font-size:10px;line-height:12px;color:#00e8f0;transform:scaleX(0.82);transform-origin:0 0">C3</div>
<div class="tbl" style="left:3px;top:365px;width:560px;height:113px"></div>
<div class="abs" style="left:4px;top:366px;width:59px;height:15px;background:#f6f000"></div>
<div class="hdot" style="left:5px;top:381px;width:557px"></div>
<div class="hdot" style="left:5px;top:397px;width:557px"></div>
<div class="hdot" style="left:5px;top:413px;width:557px"></div>
<div class="hdot" style="left:5px;top:429px;width:557px"></div>
<div class="hdot" style="left:5px;top:445px;width:557px"></div>
<div class="hdot" style="left:5px;top:461px;width:557px"></div>
<div class="vdot" style="left:63px;top:367px;height:111px"></div>
<div class="vdot" style="left:163px;top:367px;height:111px"></div>
<div class="vdot" style="left:363px;top:367px;height:111px"></div>
<div class="vdot" style="left:443px;top:367px;height:111px"></div>
<div class="cell" style="left:5px;top:367px;color:#000;letter-spacing:0">RS232</div>
<div class="cell" style="left:65px;top:367px;color:#f4f4f4;letter-spacing:0">Time</div>
<div class="cell" style="left:165px;top:367px;color:#f4f4f4;letter-spacing:0">Data</div>
<div class="cell" style="left:365px;top:367px;color:#f4f4f4;letter-spacing:0">DataLength</div>
<div class="cell" style="left:445px;top:367px;color:#f4f4f4;letter-spacing:0">Bit Rate</div>
<div class="cell" style="left:5px;top:383px">1</div>
<div class="cell" style="left:65px;top:383px">652.82 &micro;s</div>
<div class="cell" style="left:165px;top:383px">0x0d 42 0f 08 33 01 68 43 0a</div>
<div class="cell" style="left:365px;top:383px">72</div>
<div class="cell" style="left:445px;top:383px">115.054 kbit/s</div>
<div class="cell" style="left:5px;top:399px">2</div>
<div class="cell" style="left:65px;top:399px">16.43032 ms</div>
<div class="cell" style="left:165px;top:399px">0x0d 42 0f 08 10 00 00 42 09 0a</div>
<div class="cell" style="left:365px;top:399px">80</div>
<div class="cell" style="left:445px;top:399px">115.069 kbit/s</div>
<div class="cell" style="left:5px;top:415px">3</div>
<div class="cell" style="left:65px;top:415px">32.65907 ms</div>
<div class="cell" style="left:165px;top:415px">0x0d 42 0f 08 11 00 00 75 39 0a</div>
<div class="cell" style="left:365px;top:415px">80</div>
<div class="cell" style="left:445px;top:415px">115.051 kbit/s</div>
<div class="tbl" style="left:3px;top:480px;width:560px;height:48px"></div>
<div class="abs" style="left:4px;top:481px;width:59px;height:15px;background:#00f4f8"></div>
<div class="hdot" style="left:5px;top:496px;width:557px"></div>
<div class="hdot" style="left:5px;top:512px;width:557px"></div>
<div class="vdot" style="left:63px;top:482px;height:46px"></div>
<div class="vdot" style="left:163px;top:482px;height:46px"></div>
<div class="vdot" style="left:363px;top:482px;height:46px"></div>
<div class="vdot" style="left:443px;top:482px;height:46px"></div>
<div class="cell" style="left:5px;top:482px;color:#000;letter-spacing:0">RS232</div>
<div class="cell" style="left:65px;top:482px;color:#f4f4f4;letter-spacing:0">Time</div>
<div class="cell" style="left:165px;top:482px;color:#f4f4f4;letter-spacing:0">Data</div>
<div class="cell" style="left:365px;top:482px;color:#f4f4f4;letter-spacing:0">DataLength</div>
<div class="cell" style="left:445px;top:482px;color:#f4f4f4;letter-spacing:0">Bit Rate</div>
<div class="cell" style="left:5px;top:498px">1</div>
<div class="cell" style="left:65px;top:498px">-85.78 &micro;s</div>
<div class="cell" style="left:165px;top:498px">0x0d 0f 42 04 33 6d d7 0a</div>
<div class="cell" style="left:365px;top:498px">64</div>
<div class="cell" style="left:445px;top:498px">115.290 kbit/s</div>
<div class="cell" style="left:5px;top:514px">2</div>
<div class="cell" style="left:65px;top:514px">15.68452 ms</div>
<div class="cell" style="left:165px;top:514px">0x0d 0f 42 04 10 79 d6 0a</div>
<div class="cell" style="left:365px;top:514px">64</div>
<div class="cell" style="left:445px;top:514px">115.558 kbit/s</div>
<div class="abs" style="left:564px;top:480px;width:33px;height:51px;border:1px solid #7a7a7a;background:#222"></div>
<div class="abs" style="left:565px;top:481px;width:31px;height:29px;background:#6a6a6a"></div>
<div class="abs" style="left:566px;top:482px;width:28px;height:27px;background:#3e5252"></div>
<svg width="1024" height="600" style="position:absolute;left:0;top:0"><polygon points="580.5,482 593.5,494 567.5,494" fill="#f6f0f6"/><polygon points="567.5,496.5 593.5,496.5 580.5,510" fill="#f6f0f6"/></svg>
<div class="abs" style="left:4px;top:532px;width:97px;height:16px;background:#f6f000"></div>
<div class="abs" style="left:4px;top:548px;width:97px;height:33px;background:#424242"></div>
<div class="lbl" style="left:7px;top:532px;font-size:13.5px;color:#000;line-height:17px">C1</div>
<div class="badge" style="left:64px;top:533px;width:34px;height:14px;color:#f4f000;font-size:10.5px;letter-spacing:0.4px;line-height:14px">DC1M</div>
<div class="lbl r" style="left:4px;width:95px;top:550px">10.0 V/div</div>
<div class="lbl r" style="left:4px;width:95px;top:565px">500 mV ofst</div>
<div class="abs" style="left:103px;top:531px;width:99px;height:50px;background:#224365;border:2px solid #2a8ef0;border-radius:2px"></div>
<div class="abs" style="left:105px;top:533px;width:95px;height:15px;background:#00f4f8"></div>
<div class="lbl" style="left:107px;top:532px;font-size:13.5px;color:#000;line-height:17px">C3</div>
<div class="badge" style="left:164px;top:533px;width:34px;height:14px;color:#00e8e8;font-size:10.5px;letter-spacing:0.4px;line-height:14px">DC1M</div>
<div class="lbl r" style="left:104px;width:95px;top:550px">5.00 V/div</div>
<div class="lbl r" style="left:104px;width:95px;top:565px">-13.85 V ofst</div>
<div class="abs" style="left:692px;top:532px;width:112px;height:15px;background:#f6f2f6"></div>
<div class="abs" style="left:692px;top:547px;width:112px;height:34px;background:#424242"></div>
<div class="lbl" style="left:695px;top:533px;color:#101028;letter-spacing:-0.4px">DVM</div>
<div class="abs" style="left:762px;top:533px;width:20px;height:13px;background:#000"></div>
<div class="abs" style="left:783px;top:533px;width:19px;height:13px;background:#000"></div>
<div class="lbl" style="left:762px;top:533px;width:20px;text-align:center;font-size:10px;line-height:13px">DC</div>
<div class="lbl" style="left:783px;top:533px;width:19px;text-align:center;font-size:10px;line-height:13px">C1</div>
<div class="lbl" style="left:694px;top:549px;font-size:20px;line-height:23px;color:#f0f000">-5.16677</div>
<div class="abs" style="left:808px;top:532px;width:111px;height:15px;background:#f6f2f6"></div>
<div class="abs" style="left:808px;top:547px;width:111px;height:34px;background:#424242"></div>
<div class="lbl" style="left:810px;top:533px;color:#101028;letter-spacing:0.3px">Timebase -20.0 ms</div>
<div class="lbl r" style="left:808px;width:109px;top:550px">5.00 ms/div</div>
<div class="lbl" style="left:811px;top:565px">100 kS</div>
<div class="lbl r" style="left:808px;width:108px;top:565px">2 MS/s</div>
<div class="abs" style="left:922px;top:532px;width:97px;height:15px;background:#f6f2f6"></div>
<div class="abs" style="left:922px;top:547px;width:97px;height:34px;background:#424242"></div>
<div class="lbl" style="left:925px;top:533px;color:#101028">Trigger</div>
<div class="badge" style="left:983px;top:533px;width:16px;height:13px;color:#f0f0f0;font-size:10px;line-height:13px">C3</div>
<div class="badge" style="left:1000px;top:533px;width:18px;height:13px;color:#f0f0f0;font-size:10px;line-height:13px">DC</div>
<div class="lbl" style="left:925px;top:550px">Stop</div>
<div class="lbl r" style="left:922px;width:95px;top:550px">0.00 V</div>
<div class="lbl" style="left:925px;top:565px">UART</div>
<div class="abs" style="left:0;top:582px;width:1024px;height:18px;background:#202020;border-top:1px solid #151515"></div>
<div class="abs" style="left:0;top:583px;width:1024px;height:1px;background:#545264"></div>
<div class="lbl" style="left:7px;top:584px;font-size:16px;line-height:17px;font-weight:bold;color:#ececec;transform:scaleX(0.8);transform-origin:0 0">TELEDYNE</div>
<div class="lbl" style="left:78px;top:584px;font-size:16px;line-height:17px;color:#dcdcdc;transform:scaleX(0.71);transform-origin:0 0">LECROY</div>
<div class="lbl r" style="left:800px;width:208px;top:585px;letter-spacing:0.1px">5/12/2020 10:11:43 AM</div>
</body></html>
